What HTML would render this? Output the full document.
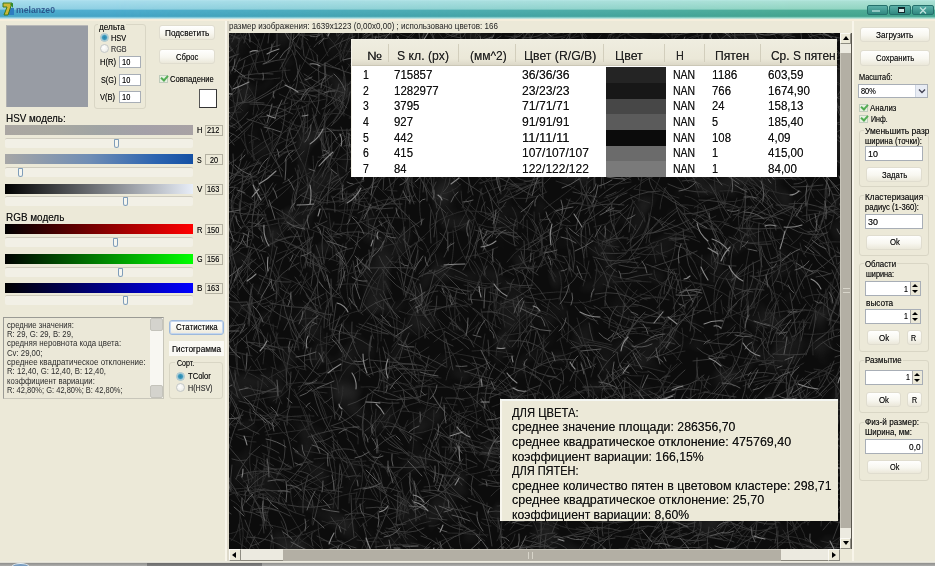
<!DOCTYPE html>
<html lang="ru">
<head>
<meta charset="utf-8">
<title>melanze0</title>
<style>
*{box-sizing:border-box;margin:0;padding:0}
html,body{width:935px;height:566px;overflow:hidden;background:#ece9d8}
body{position:relative;font-family:"Liberation Sans",sans-serif;font-size:9px;color:#222;line-height:1}
.a{position:absolute}
.t{position:absolute;white-space:nowrap;line-height:12px;height:12px;color:#161616;transform-origin:0 50%;text-shadow:0 0 .6px rgba(0,0,0,.6)}
#title{left:0;top:0;width:935px;height:19px;background:linear-gradient(180deg,#b2e2f0 0%,#a6dcec 8%,#8fd0e3 47%,#4eadcf 55%,#44a4c6 86%,#8ccce0 93%,#d8ecec 100%)}
#title .g{position:absolute;left:0;top:0;width:935px;height:19px;background:linear-gradient(180deg,#b6e8e0 0%,#aae0d4 8%,#92d5c2 47%,#4dac96 55%,#44a48e 86%,#8ccfc0 93%,#d8ece0 100%);-webkit-mask-image:linear-gradient(90deg,transparent 12%,rgba(0,0,0,.55) 50%,#000 85%);mask-image:linear-gradient(90deg,transparent 12%,rgba(0,0,0,.55) 50%,#000 85%)}
.btn{position:absolute;background:linear-gradient(180deg,#fffffe 0%,#f8f7f0 55%,#ebe8da 100%);border:1px solid #e0ddcf;border-radius:3px}
.inp{position:absolute;background:#fff;border:1px solid #a8aeb6}
.grp{position:absolute;border:1px solid #d9d6c5;border-radius:3px}
.lg{position:absolute;background:#ece9d8;height:9px}
.bar{position:absolute;left:5px;width:188px;height:10px}
.trk{position:absolute;left:5px;width:188px;height:10px;border-top:1px solid #cfccbe;background:#f2f0e6;border-radius:2px}
.th{position:absolute;width:5px;height:9px;border:1px solid #7f9db9;border-radius:1px 1px 3px 3px;background:#f6f6f0}
.val{position:absolute;left:205px;width:18px;height:11px;border:1px solid #b4b1a2;background:#ece9d8}
.rad{position:absolute;width:9px;height:9px;border-radius:50%;border:1px solid #c4c8c8;background:radial-gradient(circle at 40% 35%,#fff 0%,#e6e6de 100%)}
.rad.on{border-color:#a8c4cc;background:radial-gradient(circle at 50% 50%,#2a86aa 0%,#3c98bc 40%,#dfeaea 78%)}
.chk{position:absolute;width:9px;height:8px;border:1px solid #c0ccbc;background:#e8f0e2}
.chk:after{content:"";position:absolute;left:1px;top:-1px;width:5px;height:3px;border-left:2px solid #52ac52;border-bottom:2px solid #52ac52;transform:rotate(-48deg)}
.spb{position:absolute;right:0;top:0;width:10px;height:100%;background:#ece9d8;border-left:1px solid #aaa}
.spb:before{content:"";position:absolute;left:1px;top:2px;border:3px solid transparent;border-top:0;border-bottom:3px solid #000}
.spb:after{content:"";position:absolute;left:1px;bottom:2px;border:3px solid transparent;border-bottom:0;border-top:3px solid #000}
.sw{position:absolute;left:606px;width:60px}
.cs{position:absolute;top:44px;width:1px;height:18px;background:#d2cebc}
.sb{position:absolute;background:#ece9d8;border:1px solid #fbfaf4;border-right-color:#8e8c82;border-bottom-color:#8e8c82}
</style>
</head>
<body>
<!-- title bar -->
<div id="title" class="a"><div class="g"></div>
  <svg class="a" style="left:2px;top:2px" width="13" height="14" viewBox="0 0 13 14"><rect x="6" y="6" width="6" height="7" fill="#2c7cc0"/><path d="M1 1h9l-1 3-3 9H2l3-8H1z" fill="#cdb838" stroke="#3c7a1c" stroke-width="1"/><path d="M8 2l3-1v5z" fill="#2c8a2c"/></svg>
  <div class="a" style="left:867px;top:5px;width:21px;height:10px;border:1px solid #24706c;border-radius:2px;background:linear-gradient(#5cb0a8,#2f8880)"><div class="a" style="left:4px;top:4px;width:8px;height:2px;background:#c8e8e4;opacity:.6"></div></div>
  <div class="a" style="left:889px;top:5px;width:22px;height:10px;border:1px solid #24706c;border-radius:2px;background:linear-gradient(#5cb0a8,#2f8880)"><div class="a" style="left:8px;top:1px;width:7px;height:6px;border:1px solid #10282c;border-top-width:2px;background:#cfe8e4"></div></div>
  <div class="a" style="left:912px;top:5px;width:22px;height:10px;border:1px solid #24706c;border-radius:2px;background:linear-gradient(#5cb0a8,#2f8880)"><svg class="a" style="left:6px;top:1px" width="8" height="7" viewBox="0 0 8 7"><path d="M1 0.5l6 6M7 0.5l-6 6" stroke="#d8f0ec" stroke-width="1.3" opacity=".85"/></svg></div>
</div>
<div class="a" style="left:0;top:19px;width:935px;height:2px;background:#f6eedc"></div>

<!-- LEFT PANEL -->
<div class="a" style="left:6px;top:25px;width:82px;height:82px;background:#989ca4;border-top:1px solid #b8b8b8;border-left:1px solid #b0b0b0"></div>
<div class="grp" style="left:94px;top:24px;width:52px;height:85px"></div><div class="lg" style="left:98px;top:21px;width:28px"></div>
<div class="rad on" style="left:100px;top:33px"></div>
<div class="rad" style="left:100px;top:44px"></div>
<div class="inp" style="left:119px;top:56px;width:22px;height:12px"></div>
<div class="inp" style="left:119px;top:74px;width:22px;height:12px"></div>
<div class="inp" style="left:119px;top:91px;width:22px;height:12px"></div>

<div class="btn" style="left:159px;top:25px;width:56px;height:15px"></div>
<div class="btn" style="left:159px;top:49px;width:56px;height:15px"></div>
<div class="chk" style="left:159px;top:75px"></div>
<div class="a" style="left:199px;top:89px;width:18px;height:19px;background:#fff;border:1px solid #555;border-right-color:#333;border-bottom-color:#333"></div>

<div class="bar" style="top:125px;background:linear-gradient(90deg,#aaa6a2,#a8a8a0 25%,#a0a4a4 50%,#a4a0a8 75%,#a8a2a4)"></div>
<div class="val" style="top:125px"></div>
<div class="trk" style="top:138px"></div><div class="th" style="left:114px;top:139px"></div>

<div class="bar" style="top:154px;background:linear-gradient(90deg,#a6a6a6,#6f8db5 45%,#2c64b0 80%,#1450a4)"></div>
<div class="val" style="top:154px"></div>
<div class="trk" style="top:167px"></div><div class="th" style="left:18px;top:168px"></div>

<div class="bar" style="top:184px;background:linear-gradient(90deg,#000,#e8eef8)"></div>
<div class="val" style="top:184px"></div>
<div class="trk" style="top:196px"></div><div class="th" style="left:123px;top:197px"></div>

<div class="bar" style="top:224px;background:linear-gradient(90deg,#000,#f00)"></div>
<div class="val" style="top:224px"></div>
<div class="trk" style="top:237px"></div><div class="th" style="left:113px;top:238px"></div>

<div class="bar" style="top:254px;background:linear-gradient(90deg,#000,#0f0)"></div>
<div class="val" style="top:254px"></div>
<div class="trk" style="top:267px"></div><div class="th" style="left:118px;top:268px"></div>

<div class="bar" style="top:283px;background:linear-gradient(90deg,#000,#00f)"></div>
<div class="val" style="top:283px"></div>
<div class="trk" style="top:295px"></div><div class="th" style="left:123px;top:296px"></div>

<!-- memo -->
<div class="a" style="left:3px;top:317px;width:161px;height:82px;border:1px solid #9a9a94;border-right-color:#c8c6ba;border-bottom-color:#c8c6ba;background:#ebe8d8"></div>
<div class="a" style="left:150px;top:318px;width:13px;height:80px;background:#f8f7f2"></div>
<div class="a" style="left:150px;top:318px;width:13px;height:13px;background:#d4d3cd;border:1px solid #c4c3bb;border-radius:2px"></div>
<div class="a" style="left:150px;top:385px;width:13px;height:13px;background:#d4d3cd;border:1px solid #c4c3bb;border-radius:2px"></div>
<div class="btn" style="left:169px;top:320px;width:55px;height:15px;border-color:#9db9dc;box-shadow:0 0 0 1px #c4d6ee inset"></div>
<div class="a" style="left:169px;top:341px;width:55px;height:15px;background:#faf9f4"></div>
<div class="grp" style="left:169px;top:362px;width:54px;height:37px"></div><div class="lg" style="left:175px;top:358px;width:18px"></div>
<div class="rad on" style="left:176px;top:372px"></div>
<div class="rad" style="left:176px;top:383px"></div>

<!-- panel separator -->
<div class="a" style="left:225px;top:21px;width:2px;height:540px;background:#f8f5ea"></div>
<div class="a" style="left:227px;top:21px;width:2px;height:540px;background:#dedacb"></div>

<!-- CENTER -->
<div class="a" id="img" style="left:229px;top:33px;width:611px;height:516px;background:#0a0a0a;overflow:hidden"><svg class="a" style="left:0;top:0" width="611" height="516" viewBox="0 0 611 516"><filter id="n" x="0" y="0" width="100%" height="100%"><feTurbulence type="fractalNoise" baseFrequency="0.03" numOctaves="2" seed="4"/><feColorMatrix type="matrix" values="0 0 0 0 0.11  0 0 0 0 0.11  0 0 0 0 0.11  0.6 0.6 0 0 -0.62"/></filter><filter id="b" x="0" y="0" width="100%" height="100%"><feGaussianBlur stdDeviation="0.6"/></filter><rect width="611" height="516" fill="#0c0c0c"/><rect width="611" height="516" filter="url(#n)"/><g fill="none" stroke-linecap="round" filter="url(#b)"><path stroke="#2c2c2c" stroke-width="0.9" d="M134 282Q121 270 121 252M525 124Q546 135 567 147M462 353Q461 372 464 392M552 34Q551 43 553 52M175 262Q173 250 168 239M563 190Q576 198 589 205M365 157Q364 146 366 136M225 409Q231 394 230 378M46 159Q64 148 82 139M536 74Q545 90 544 107M58 274Q48 255 30 245M170 421Q158 420 147 417M24 307Q29 285 47 273M465 75Q481 67 496 59M489 175Q474 179 463 190M541 7Q550 11 560 14M185 154Q174 141 171 123M32 79Q44 67 49 51M385 219Q379 206 368 196M253 365Q246 373 236 374M564 419Q553 410 541 405M47 306Q43 299 44 291M44 469Q41 464 36 462M467 499Q471 510 470 521M219 200Q233 198 241 187M248 395Q249 376 241 360M418 267Q401 261 392 245M101 128Q104 112 102 96M360 128Q359 122 361 117M292 313Q290 292 290 271M449 456Q433 469 432 490M284 107Q283 88 272 72M137 85Q129 83 120 85M538 480Q520 492 508 510M357 355Q348 363 337 365M360 511Q345 506 336 492M158 349Q165 327 155 306M405 428Q403 408 400 389M53 254Q49 236 39 220M60 498Q71 494 80 487M210 165Q218 151 218 135M209 450Q207 440 201 432M453 82Q464 90 477 93M350 92Q368 80 389 85M616 361Q611 382 606 403M371 384Q352 387 332 391M385 8Q392 0 402 0M330 496Q310 486 288 488M7 23Q3 16 -1 9M435 278Q417 282 403 293M73 235Q70 226 73 217M242 73Q248 68 256 68M-5 229Q4 211 23 206M242 200Q247 177 253 155M87 326Q85 318 89 311M375 506Q364 501 354 503M54 196Q67 184 74 166M374 375Q362 366 356 352M442 -7Q461 -14 481 -12M563 387Q552 381 539 384M48 296Q50 290 51 283M136 7Q141 -9 154 -22M35 238Q21 223 1 215M30 172Q29 166 28 159M198 219Q203 211 212 207M42 381Q57 384 72 384M6 394Q-4 386 -18 384M167 37Q180 36 191 44M85 153Q85 138 84 123M214 454Q217 440 225 429M137 428Q130 428 123 429M328 72Q338 71 344 64M491 524Q491 533 485 540M261 168Q272 156 287 151M502 212Q501 218 499 223M276 426Q251 424 233 408M185 270Q201 257 215 241M441 486Q424 495 416 512M605 337Q584 349 561 348M229 440Q238 435 248 433M235 136Q237 126 231 117M31 107Q26 103 19 102M390 434Q380 430 370 435M25 128Q22 118 24 108M419 339Q412 340 407 338M515 466Q500 484 486 503M228 39Q237 16 258 2M437 154Q432 164 431 176M489 296Q487 312 495 326M607 447Q596 449 590 458M246 465Q244 459 240 456M223 156Q229 172 244 181M306 387Q288 384 272 380M267 323Q267 309 277 299M337 471Q315 471 294 464M308 201Q304 184 289 173M360 61Q366 49 377 44M188 137Q195 122 189 106M58 469Q48 458 33 455M-15 442Q-19 433 -21 423M429 26Q447 37 468 32M22 -14Q35 -12 47 -7M37 336Q13 341 -7 330M326 324Q346 322 361 307M538 390Q538 396 535 402M574 200Q569 207 562 212M534 443Q522 446 509 448M95 119Q92 100 98 83M267 294Q263 275 267 257M416 318Q401 330 388 344M388 225Q407 216 417 197M299 301Q288 281 268 269M359 438Q352 436 346 432M466 141Q484 147 500 153M51 287Q51 268 61 251M245 300Q248 294 250 289M111 260Q104 262 99 267M315 200Q311 191 310 180M87 350Q72 348 58 351M308 362Q313 342 326 326M334 305Q332 299 333 293M618 391Q616 410 602 425M69 -16Q89 -18 109 -16M434 74Q449 72 464 74M192 104Q181 87 175 68M129 211Q121 204 111 198M168 -6Q168 -18 174 -28M257 151Q242 137 228 124M178 242Q183 232 193 227M313 514Q307 513 301 513M199 12Q208 -1 214 -16M137 80Q138 72 133 64M347 169Q352 165 354 159M445 488Q434 468 414 457M444 524Q425 516 406 512M615 136Q616 160 633 176M129 481Q125 470 128 459M333 291Q322 279 307 277M470 435Q466 426 467 416M16 482Q12 472 2 467M110 492Q122 479 136 468M186 282Q189 271 196 262M296 412Q276 415 258 406M531 246Q524 259 525 275M224 181Q220 177 217 173M54 461Q44 444 32 427M329 519Q312 521 297 513M539 136Q533 142 533 151M485 144Q486 167 496 188M104 416Q85 405 78 383M355 -19Q363 -14 372 -16M276 294Q270 276 280 259M266 251Q245 251 226 243M21 287Q8 280 -3 270M-15 1Q-9 -3 -2 -4M442 332Q437 351 424 366M629 58Q625 67 622 77M584 366Q576 379 565 389M211 321Q196 340 172 341M402 250Q393 264 394 280M568 348Q575 362 583 376M223 307Q239 302 252 289M477 402Q464 386 451 370M144 408Q157 398 161 382M126 420Q125 411 118 406M250 103Q253 84 246 66M108 227Q108 214 101 204M305 65Q309 47 324 36M92 328Q94 321 93 314M257 -6Q265 -13 266 -23M603 128Q591 145 577 159M371 43Q377 31 378 18M37 496Q33 472 17 454M148 -4Q163 -18 163 -38M335 329Q327 322 318 319M439 309Q446 297 451 285M282 33Q286 12 301 -3M50 190Q32 195 13 193M459 304Q441 296 429 279M585 415Q579 416 575 413M95 369Q90 358 81 349M512 303Q508 284 519 269M473 33Q475 40 482 44M140 159Q125 162 109 161M289 459Q293 451 291 442M268 170Q276 165 280 156M29 453Q27 448 29 443M275 481Q271 491 273 502M573 183Q597 178 620 179M178 478Q172 466 167 454M217 278Q217 267 220 257M564 24Q586 33 607 23M50 56Q56 43 53 29M158 345Q165 324 178 306M124 23Q132 20 141 18M308 123Q315 117 321 110M529 237Q536 261 524 283M264 224Q260 219 254 214M162 9Q166 -14 154 -34M404 65Q405 56 413 50M372 131Q387 139 402 147M165 269Q160 259 155 248M104 313Q85 308 73 292M549 218Q566 228 578 243M283 -2Q284 -24 299 -40M35 451Q21 456 6 456M177 396Q162 388 145 388M586 515Q567 507 547 510M404 369Q402 363 396 361M259 -1Q255 -5 253 -10M364 133Q366 126 367 119M593 19Q591 25 594 32M242 394Q232 392 223 386M451 233Q457 243 465 252M592 274Q588 280 587 287M310 280Q293 284 284 299M583 468Q564 463 545 469M224 400Q231 395 236 387M7 14Q13 7 16 -1M413 204Q424 183 424 159M44 525Q46 500 36 478M600 299Q598 308 603 316M397 368Q383 374 372 384M576 481Q563 488 547 485M98 386Q94 367 80 354M587 167Q605 178 623 190M310 22Q307 15 304 8M74 502Q63 485 53 466M192 447Q182 458 177 472M297 487Q294 473 292 458M108 232Q118 223 117 210M177 63Q180 69 185 72M510 175Q508 191 513 206M386 37Q394 22 393 5M99 351Q84 348 69 354M6 457Q-1 451 -6 442M167 276Q182 262 184 241M473 344Q474 363 462 378M377 85Q374 80 374 74M402 165Q410 176 416 188M465 349Q461 357 461 365M177 281Q189 269 201 258M479 458Q472 434 450 422M124 142Q137 161 156 172M609 428Q603 447 595 465M589 436Q585 445 583 454M407 358Q398 363 390 367M259 420Q240 421 222 414M95 115Q96 108 100 101M485 53Q506 60 516 80M12 79Q-10 82 -32 73M144 111Q156 94 171 81M188 358Q168 349 150 337M441 129Q454 135 468 140M-15 14Q-13 -3 -3 -20M107 404Q93 384 89 361M97 -9Q109 -18 120 -28M14 495Q6 501 -3 501M362 344Q366 334 365 324M619 444Q616 451 610 456M468 75Q484 61 505 56M516 165Q518 187 505 204M-15 216Q-21 211 -28 210M580 421Q568 418 557 414M-1 414Q-16 401 -27 384M272 88Q271 75 275 62M557 268Q552 262 544 260M98 338Q96 319 98 300M433 277Q419 287 402 284M442 131Q458 117 467 97M156 243Q159 237 162 231M247 185Q237 192 225 194M597 183Q587 197 578 213M513 148Q536 158 545 182M413 487Q389 484 368 498M281 497Q291 486 290 472M372 9Q387 7 399 -2M192 482Q187 475 183 468M511 156Q518 158 525 155M613 291Q588 285 574 264M50 383Q26 385 5 373M575 140Q587 144 601 142M28 458Q38 445 40 429M312 333Q315 318 315 302M42 139Q57 129 70 115M332 475Q327 483 318 486M263 296Q263 284 271 275M572 -13Q587 -5 598 7M624 296Q616 296 607 297M601 419Q588 434 583 455M150 528Q142 507 153 488M180 266Q186 243 205 228M428 360Q417 363 405 363M378 210Q387 208 395 203M76 46Q92 32 110 22M158 157Q163 158 168 158M10 196Q17 194 21 187M433 251Q429 270 430 288M194 59Q197 42 212 31M563 141Q568 144 573 147M179 506Q170 497 157 495M239 274Q230 272 221 267M35 525Q24 516 15 504M200 516Q192 511 182 510M135 16Q133 2 135 -11M584 472Q571 478 557 485M595 23Q615 31 623 51M407 291Q401 296 394 302M268 199Q265 192 265 184M590 74Q591 79 590 84M403 31Q407 35 410 41M52 190Q72 192 91 200M561 482Q574 492 577 508M60 76Q72 78 81 70M258 77Q280 87 303 89M126 -7Q125 -12 126 -17M618 300Q617 307 612 312M198 66Q204 49 218 39M68 409Q51 402 45 384M156 460Q162 444 176 433M49 215Q44 212 40 208M473 473Q462 475 453 481M465 408Q457 429 438 441M42 108Q39 96 35 86M382 -5Q404 -6 424 -3M19 121Q15 109 15 97M453 457Q432 457 414 469M482 475Q471 457 463 439M230 -11Q243 -7 250 3M410 534Q395 547 389 566M295 440Q277 441 259 443M441 354Q417 352 395 364M241 501Q230 500 219 500M219 295Q223 286 231 280M510 122Q527 131 537 147M526 274Q508 280 491 287M34 331Q35 315 39 300M431 251Q425 245 425 237M469 400Q453 419 429 426M310 375Q297 378 290 388M572 492Q557 505 541 517M174 486Q178 471 173 457M295 484Q274 491 253 486M607 45Q593 54 586 69M394 526Q396 532 397 539M450 277Q462 285 466 299M142 503Q136 497 134 490M119 31Q127 40 136 50M449 107Q457 114 467 121M380 106Q388 125 398 143M608 311Q614 318 624 322M234 306Q240 292 249 281M595 187Q599 203 601 220M518 184Q517 194 519 205M468 22Q465 34 465 47M-17 47Q-39 43 -61 40M266 158Q262 150 262 141M174 41Q199 43 218 28M591 31Q601 27 612 22M40 345Q57 333 77 333M411 -13Q420 -24 432 -28M627 210Q617 217 612 228M87 497Q67 506 45 505M623 425Q610 408 588 404M320 59Q315 42 320 25M440 207Q447 208 454 206M450 39Q455 41 460 43M529 99Q509 110 489 121M86 475Q73 465 62 452M531 183Q552 191 564 209M65 356Q74 376 81 397M10 244Q16 223 34 211M428 155Q438 162 450 165M75 151Q68 144 66 135M309 218Q298 216 287 216M147 -1Q139 3 131 8M272 135Q291 151 315 150M349 392Q332 386 314 392M87 -15Q79 -16 72 -22M88 156Q104 137 103 112M228 395Q224 393 222 387M580 7Q590 10 600 8M11 469Q0 447 -20 433M301 461Q298 450 289 444M156 51Q165 35 174 19M613 328Q605 345 607 363M29 502Q36 491 37 477M2 256Q18 245 23 226M418 13Q428 22 435 34M305 145Q307 131 299 120M543 399Q534 405 524 408M525 143Q533 151 543 157M519 13Q512 -7 513 -28M354 173Q351 151 351 128M358 4Q351 -7 342 -18M469 344Q473 352 480 358M261 298Q257 285 260 273M360 362Q353 373 354 386M146 294Q159 284 166 269M192 189Q189 168 192 146M142 125Q143 119 147 114M419 200Q429 200 436 193M97 416Q95 407 89 399M172 210Q165 198 157 188M598 203Q607 216 608 231M34 289Q15 280 5 262M377 63Q380 56 383 50M250 422Q260 421 269 417M305 478Q289 481 276 492M127 460Q113 461 101 467M70 158Q92 145 98 121M99 199Q104 195 105 189M38 131Q43 108 61 93M299 425Q281 413 259 415M446 106Q456 100 465 93M29 458Q11 456 -4 464M355 397Q335 383 329 359M209 166Q200 161 196 150M52 -5Q68 -14 76 -31M195 284Q203 278 212 275M609 366Q617 378 617 393M388 372Q377 359 370 343M40 404Q36 394 33 383M529 279Q532 293 540 305M245 138Q241 124 245 110M107 76Q100 55 95 33M67 480Q60 467 62 452M182 30Q182 19 188 10M130 87Q151 93 171 86M85 308Q81 304 77 299M263 232Q256 223 245 222M25 308Q30 297 32 285M610 487Q590 481 570 480M574 286Q561 307 559 331M404 460Q388 443 366 437M501 258Q498 272 503 285M198 49Q206 36 212 23M103 534Q100 528 93 524M285 82Q296 72 307 62M495 508Q491 502 484 502M547 386Q539 386 532 390M549 -7Q556 -5 563 -3M452 172Q465 171 476 177M364 253Q377 234 397 221M429 415Q413 411 400 399M341 484Q335 484 330 485M22 124Q39 113 54 100M608 408Q596 416 593 431M108 294Q116 289 120 282M325 248Q323 242 319 237M207 371Q189 384 171 398M163 222Q168 207 176 194M34 293Q44 283 44 268M253 321Q254 311 256 301M562 85Q569 83 576 81M567 337Q547 345 526 352M259 108Q273 98 286 87M113 508Q102 510 92 507M364 188Q355 169 358 148M216 299Q211 305 205 309M261 254Q248 256 235 252M84 389Q71 387 57 386M209 484Q219 471 216 455M71 261Q74 250 78 240M240 159Q248 147 260 137M266 147Q276 135 281 120M383 229Q367 221 353 209M562 38Q569 51 580 60M339 56Q338 40 325 29M341 337Q334 322 331 306M546 263Q536 273 536 287M468 259Q464 269 459 277M452 330Q443 339 433 345M170 278Q186 285 203 281M547 367Q530 369 514 374M192 55Q212 42 223 21M100 160Q107 154 116 156M394 62Q413 54 433 51M153 458Q155 433 137 415M162 459Q174 440 195 431M279 487Q270 486 261 484M257 183Q256 169 251 156M-16 308Q2 303 16 289M618 488Q612 504 605 519M318 215Q327 223 338 224M294 195Q294 189 295 182M515 182Q531 183 546 188M559 29Q571 34 583 31M113 153Q108 142 108 130M272 359Q255 348 235 352M41 532Q41 517 43 502M129 411Q130 405 128 400M389 5Q391 14 394 23M128 185Q113 178 96 175M385 107Q391 103 395 97M362 23Q377 17 385 3M163 261Q159 255 156 248M524 419Q533 433 531 450M140 186Q160 183 180 186M390 40Q403 38 416 36M232 464Q213 455 199 440M97 530Q88 515 73 508M471 142Q486 155 495 172M450 376Q427 378 407 369M-13 80Q7 74 26 64M608 515Q605 523 597 527M149 154Q163 168 178 182M96 457Q77 444 55 437M571 467Q571 454 562 445M501 109Q509 131 523 148M232 339Q227 325 219 313M111 530Q93 517 77 501M246 241Q239 234 239 223M-16 174Q-10 151 -14 128M60 15Q65 -6 54 -25M175 137Q172 125 175 113M160 289Q152 288 145 283M33 17Q25 8 13 4M366 276Q356 274 350 267M151 106Q160 93 158 77M90 -5Q107 8 115 29M-13 201Q-35 205 -58 206M387 317Q373 310 356 309M251 81Q264 79 276 83M13 152Q21 147 30 147M473 57Q472 66 475 74M487 117Q492 123 496 129M-18 116Q-20 109 -26 106M398 75Q411 74 421 83M85 263Q76 251 71 237M426 157Q433 142 436 126M-9 307Q4 290 15 271M356 181Q365 173 365 161M147 262Q149 240 164 224M613 72Q621 83 633 89M14 139Q17 134 21 129M345 -18Q339 -8 334 1M6 255Q0 244 -10 237M303 7Q295 -11 292 -31M289 366Q279 363 270 359M465 359Q467 347 469 334M317 310Q308 300 301 288M465 44Q461 21 474 1M562 309Q547 319 533 330M131 531Q130 519 136 509M602 34Q611 14 629 4M401 43Q412 59 427 72M441 337Q435 332 430 326M471 263Q464 266 456 268M464 363Q459 367 456 371M-2 223Q9 215 11 202M349 317Q340 310 332 301M327 148Q351 154 366 173M302 15Q311 12 319 8M305 363Q302 357 298 354M466 446Q457 444 447 443M541 92Q554 90 565 98M572 227Q580 247 585 268M620 276Q642 281 664 279M256 71Q260 52 274 38M420 90Q443 91 465 87M223 523Q211 517 207 505M587 529Q565 518 554 497M6 200Q4 191 3 182M43 117Q43 107 44 96M582 290Q558 285 539 300M72 107Q69 96 62 87M-2 -2Q0 -13 3 -23M395 295Q400 290 400 283M35 477Q24 469 21 456M-19 258Q-17 241 -17 223M552 113Q551 132 564 147M283 142Q291 137 300 138M200 335Q196 329 190 324M592 12Q598 24 605 36M219 144Q224 132 236 125M569 78Q582 74 589 64M47 151Q36 173 12 183M220 54Q226 34 239 15M272 250Q250 261 225 256M188 408Q176 400 164 391M270 390Q268 385 263 382M447 -8Q467 -12 486 -19M558 350Q545 347 533 354M278 111Q285 107 292 103M449 200Q469 193 487 183M154 506Q145 503 136 507M272 396Q263 395 254 393M243 -14Q262 -16 280 -18M139 407Q150 388 164 371M560 336Q548 346 544 362M470 418Q447 416 426 425M213 191Q216 185 219 179M364 172Q387 166 407 152M567 89Q578 100 594 105M53 371Q48 361 45 349M455 355Q437 347 418 345M263 143Q271 140 277 133M11 324Q-1 318 -13 323M190 306Q192 286 180 270M82 351Q87 348 93 349M294 451Q272 448 250 452M501 238Q486 255 486 278M131 227Q148 213 169 210M390 118Q411 121 431 114M536 114Q547 135 547 159M413 500Q404 501 399 508M433 308Q421 297 407 287M504 174Q482 173 463 182M487 227Q485 238 485 249M415 67Q423 77 435 77M407 129Q413 108 419 87M369 201Q376 194 382 186M262 441Q273 422 288 406M616 95Q621 111 626 126M97 64Q79 54 69 36M372 -12Q375 -18 380 -21M37 187Q18 173 1 159M189 -14Q188 -27 189 -39M411 112Q418 113 424 118M143 81Q128 85 119 99M302 528Q281 521 271 500M124 172Q134 160 146 149M24 373Q30 361 29 348M72 507Q55 490 31 492M618 335Q606 348 607 365M170 516Q163 506 156 497M451 178Q459 191 467 205M502 184Q491 188 486 199M361 496Q345 499 331 508M215 69Q227 58 229 42M22 449Q25 437 29 426M617 74Q626 86 635 98M602 249Q600 260 603 271M243 271Q222 276 199 273M-15 268Q-27 280 -39 292M301 359Q296 346 295 331M211 491Q206 494 200 493M316 422Q305 422 294 426M374 479Q373 466 375 453M499 285Q498 262 508 242M-4 501Q-1 496 0 490M287 238Q300 218 322 211M69 313Q60 302 61 287M141 26Q148 24 156 22M312 454Q296 453 280 458M72 61Q85 56 99 59M551 337Q564 337 575 330M310 224Q317 206 310 189M430 427Q417 434 401 436M546 535Q539 535 532 535M80 218Q73 203 75 186M346 148Q356 130 352 110M207 0Q223 -7 237 -16M360 323Q353 304 348 285M619 65Q622 85 623 106M205 415Q210 408 212 399M308 233Q296 233 287 241M11 -6Q28 -19 36 -39M327 189Q337 195 348 192M595 353Q582 358 573 370M499 144Q522 138 544 143M80 218Q61 213 48 200M474 488Q465 475 450 472M18 52Q19 39 25 27M-2 194Q0 181 0 168M410 412Q402 411 395 408M523 157Q538 175 561 183M383 385Q368 377 355 366M272 258Q255 245 245 228M533 426Q514 420 497 430M97 204Q104 202 111 205M49 311Q42 298 39 283M199 36Q198 27 197 17M491 349Q484 362 471 370M435 410Q437 422 430 431M531 -11Q549 -11 563 1M454 175Q463 183 475 183M473 252Q467 256 461 260M207 395Q195 400 182 401M141 524Q137 510 126 499M-4 302Q-7 291 -15 282M20 -8Q21 -17 15 -24M396 515Q407 497 409 475M64 479Q53 474 47 464M572 406Q565 411 563 421M545 280Q540 287 533 288M439 130Q450 129 461 134M475 295Q459 286 441 286M582 277Q561 277 547 293M196 159Q197 148 205 139M49 83Q62 93 79 95M361 79Q382 81 403 84M162 520Q154 511 147 501M63 264Q52 249 41 235M519 105Q519 114 523 123M442 244Q423 259 400 267M435 502Q428 515 426 530M27 409Q16 409 7 403M447 201Q447 219 440 235M155 348Q151 332 150 315M455 175Q456 188 463 199M235 -17Q243 -30 255 -39M37 173Q54 162 67 147M312 463Q312 449 306 437M258 504Q242 490 232 472M144 170Q166 162 187 169M423 1Q432 0 441 1M630 109Q639 118 651 121M629 17Q639 14 644 5M486 254Q483 275 488 296M520 232Q516 254 520 276M426 412Q413 399 396 393M516 496Q503 504 488 502M32 336Q30 331 28 326M25 172Q40 184 42 204M1 347Q-1 338 -2 329M592 43Q589 48 585 52M121 119Q130 122 139 122M264 437Q256 433 249 426M621 241Q611 249 602 258M132 301Q113 297 95 305M511 56Q519 57 526 54M113 337Q101 339 89 341M572 95Q577 100 584 104M427 230Q426 218 420 207M413 394Q403 373 400 349M361 126Q374 114 390 108M233 113Q239 111 246 107M374 68Q380 65 386 62M361 181Q362 169 353 160M238 229Q227 209 225 187M533 57Q542 71 545 88M407 507Q417 527 415 550M39 483Q18 474 5 456M543 451Q558 468 562 491M362 245Q358 234 347 228M150 509Q139 509 128 507M180 352Q170 348 159 352M2 508Q9 501 10 491M346 18Q352 24 355 31M51 195Q58 186 63 176M231 38Q233 32 236 26M275 15Q283 5 293 -1M428 133Q434 137 437 144M453 497Q439 501 429 513M7 356Q-5 344 -20 336M628 382Q622 385 615 389M216 295Q194 300 176 314M122 1Q118 -12 111 -25M608 214Q610 223 618 229M520 149Q540 160 563 162M573 523Q563 520 553 520M277 367Q270 372 263 374M576 424Q565 433 556 445M332 463Q329 458 326 454M594 18Q583 29 581 45M370 213Q366 190 363 166M106 381Q97 368 85 359M515 468Q501 483 493 502M599 396Q598 410 589 421M617 293Q612 296 609 300M613 503Q593 515 577 532M354 216Q347 205 336 198M506 491Q499 491 491 492M102 425Q108 411 102 397M82 378Q74 369 65 362M258 56Q264 54 266 47M352 64Q368 55 384 47M599 436Q598 443 593 449M470 35Q472 30 472 25M291 478Q299 469 300 457M402 380Q402 390 401 399M242 473Q234 476 226 477M574 265Q584 260 595 262M196 21Q206 14 218 14M141 92Q148 76 149 58M83 63Q105 59 125 49M319 369Q315 365 313 358M-19 -2Q-13 -24 -12 -47M373 43Q394 47 411 35M240 46Q265 49 285 34M543 157Q553 180 577 188M68 42Q77 29 81 13M502 454Q508 468 502 482M266 420Q260 417 255 412M158 94Q164 84 173 78M152 257Q130 248 107 252M-18 0Q-11 -15 -1 -30M282 436Q273 431 263 427M519 173Q526 180 536 180M135 96Q131 88 124 82M-7 347Q-18 333 -33 326M284 273Q278 275 273 274M74 -14Q83 -18 91 -24M155 527Q145 529 137 535M177 505Q173 485 162 468M124 268Q108 286 100 308M448 385Q444 380 441 375M617 335Q617 356 602 370M544 427Q540 436 538 445M570 288Q575 311 564 331M155 355Q170 349 179 334M190 351Q191 339 185 329M627 45Q640 44 653 49M465 175Q475 167 486 165M-19 338Q-17 328 -10 322M418 407Q410 402 400 402M581 35Q581 41 584 45M402 44Q412 53 425 53M76 461Q63 445 45 437M332 -2Q338 -4 343 -8M194 419Q206 400 205 377M320 95Q320 80 312 67M165 338Q170 335 177 337M535 328Q512 326 488 319M289 314Q290 304 291 294M626 326Q640 328 650 337M294 529Q284 522 274 513M371 419Q360 433 343 440M164 10Q157 3 148 0M69 333Q58 322 48 310M587 52Q590 64 597 74M445 378Q446 390 453 400M80 -4Q83 -17 82 -30M162 163Q166 143 173 125M543 199Q548 212 549 226M436 339Q415 333 394 330M523 243Q528 246 531 251M146 125Q153 121 159 117M66 397Q61 388 50 386M-17 313Q-19 300 -28 293M75 109Q75 86 64 66M144 381Q140 371 144 360M65 73Q76 63 86 51M138 27Q141 13 154 5M278 83Q290 76 299 64M98 360Q87 359 77 357M116 271Q104 250 112 228M354 253Q358 241 360 228M190 369Q169 374 155 389M422 249Q403 247 384 249M367 75Q375 91 384 108M251 429Q236 412 235 389M401 162Q410 167 421 170M329 236Q318 219 307 202M604 413Q597 432 580 443M212 -18Q208 -25 208 -33M163 532Q146 528 128 531M262 530Q239 527 220 513M327 203Q322 202 318 199M331 108Q336 92 344 77M544 516Q527 524 519 542M92 286Q78 283 65 289M387 131Q407 133 423 118M103 238Q110 235 117 235M316 425Q297 426 285 441M514 231Q507 240 502 250M146 334Q133 334 124 342M73 467Q64 451 50 440M66 262Q76 246 92 237M497 92Q502 93 506 96M354 13Q371 18 381 34M2 307Q-12 295 -31 296M171 104Q170 91 172 79M255 91Q265 109 274 128M391 -8Q379 -20 372 -37M32 382Q12 371 8 349M259 91Q258 84 263 77M15 240Q20 230 22 220M110 349Q115 335 127 328M302 107Q310 92 313 75M629 511Q610 513 592 508M371 40Q372 20 380 2M438 284Q433 295 433 307M18 251Q19 237 19 224M150 469Q135 450 132 426M516 153Q517 173 504 188M48 363Q36 365 23 368M407 61Q423 56 435 43M476 454Q455 465 432 469M366 362Q365 356 361 351M356 465Q339 464 324 455M605 353Q591 362 587 379M299 87Q317 77 322 57M475 412Q466 403 453 402M534 34Q539 38 545 37M619 -18Q618 5 612 28M443 -17Q458 -5 478 -8M14 154Q10 163 3 169M-4 457Q-5 451 -7 445M200 314Q184 326 165 325M545 470Q528 468 515 459M208 213Q209 191 200 171M14 78Q5 68 -6 61M289 338Q294 335 299 333M234 438Q228 416 210 402M475 503Q468 508 459 508M215 30Q225 32 234 27M621 126Q626 131 628 137M618 29Q622 36 623 45M209 -13Q226 -17 241 -25M494 274Q505 291 523 301M439 494Q430 506 416 510M519 210Q539 210 558 205M554 101Q535 115 523 135M372 418Q365 414 359 409M524 1Q541 9 560 14M401 83Q415 80 423 69M223 119Q228 98 238 78M393 367Q382 365 375 357M549 224Q552 230 558 232M602 335Q578 343 566 365M248 252Q255 238 259 223M578 198Q596 211 614 223M109 476Q101 457 87 444M323 0Q334 -2 344 -7M434 397Q431 419 418 438M456 82Q452 70 456 58M10 216Q15 213 21 214M39 354Q31 344 19 340M267 275Q266 253 271 230M84 99Q97 93 110 98M110 173Q123 167 130 153M169 219Q161 201 149 184M93 488Q100 491 107 491M303 468Q293 458 291 444M96 0Q114 -7 133 -7M567 227Q562 236 552 239M229 194Q237 182 242 168M448 104Q443 116 449 128M80 393Q79 383 74 374M520 123Q534 131 548 138M248 87Q234 77 220 67M144 89Q153 79 166 74M48 221Q59 217 69 213M204 259Q215 238 234 223M-1 391Q5 382 8 371M45 378Q39 382 33 386M55 449Q37 444 24 431M511 87Q525 90 533 101M532 82Q543 84 551 91M256 356Q273 343 283 324M84 257Q73 240 59 224M181 407Q164 391 163 368M310 191Q322 177 340 172M169 441Q165 448 159 453M205 389Q190 377 171 378M584 56Q604 62 622 71M474 529Q461 540 454 555M-17 39Q-35 29 -47 13M215 62Q210 51 215 40M221 420Q224 401 228 383M115 425Q111 415 103 408M245 310Q248 303 250 295M548 97Q557 108 572 108M151 36Q158 31 164 25M43 350Q42 342 44 335M602 281Q601 294 603 307M541 194Q541 215 556 229M-9 88Q10 81 19 61M71 515Q58 504 52 488M630 176Q648 194 646 220M331 277Q326 273 321 269M326 249Q321 236 315 223M497 380Q500 390 496 400M144 152Q155 141 164 128M543 328Q537 335 534 344M275 406Q263 391 253 374M443 23Q455 6 475 1M422 524Q408 508 409 486M46 214Q41 196 35 178M233 485Q227 502 233 518M491 197Q503 183 508 165M227 503Q215 506 204 512M289 131Q299 122 308 111M272 355Q257 348 242 342M466 294Q466 303 461 311M77 337Q54 333 39 315M341 228Q337 211 338 193M109 6Q108 0 112 -5M117 211Q131 194 136 173M451 515Q435 512 422 503M467 525Q462 523 456 522M310 332Q301 322 293 311M509 340Q501 342 493 345M199 31Q204 22 207 12M174 477Q160 482 146 485M424 210Q442 204 460 196M184 100Q188 90 190 80M447 392Q432 395 416 395M153 478Q151 459 149 440M289 472Q281 470 274 464M283 435Q269 422 264 403M547 57Q561 63 576 66M345 414Q340 406 330 404M435 301Q428 297 421 298M175 163Q180 140 194 122M22 194Q31 180 44 169M620 430Q609 446 591 451M99 134Q100 129 99 124M431 42Q437 47 443 52M322 81Q337 68 339 48M92 527Q84 528 77 533M494 1Q508 -2 519 -10M550 141Q557 133 564 125M204 154Q191 140 187 121M491 335Q492 357 507 373M196 280Q201 264 209 250M0 464Q-11 470 -23 475M118 179Q120 167 114 156M578 -13Q583 -7 589 -2M458 218Q467 230 471 244M372 506Q360 499 347 495M308 478Q301 472 298 462M430 461Q442 474 445 491M330 21Q340 11 355 10M411 479Q402 468 389 461M538 169Q548 184 555 200M381 85Q386 94 396 98M133 205Q118 200 102 201M518 193Q524 216 542 231M485 320Q481 310 475 301M505 203Q511 209 517 215M412 455Q393 462 374 465M163 314Q177 298 185 279M278 229Q292 210 314 205M160 467Q147 482 131 494M28 163Q35 162 40 159M318 279Q319 272 321 266M561 238Q559 246 555 253M244 192Q232 177 232 158M143 3Q162 7 180 13M302 238Q305 229 305 220M118 -8Q141 -15 162 -1M486 448Q475 470 457 486M397 432Q380 413 381 387M193 244Q198 225 211 209M494 160Q496 167 496 174M213 278Q223 289 235 298M408 299Q389 298 374 288M215 262Q229 265 242 272M554 462Q534 464 513 461M155 258Q153 246 155 234M217 309Q214 295 206 283M614 357Q623 375 618 395M90 418Q80 403 72 387M43 140Q22 128 12 105M291 258Q291 244 283 232M296 512Q288 513 282 517M396 273Q402 265 408 257M354 155Q358 149 365 145M296 427Q290 422 283 418M562 227Q539 239 530 263M581 1Q601 10 623 6M-17 310Q-31 290 -39 267M621 384Q618 377 613 373M527 294Q540 305 540 322M392 180Q372 176 359 159M232 28Q239 25 244 19M334 69Q336 62 337 54M611 230Q610 239 609 247M510 48Q518 60 524 74M304 207Q306 200 309 194M453 352Q443 353 435 359M443 139Q451 146 456 156M156 76Q165 66 169 54M464 100Q480 116 490 136M262 493Q256 493 252 489M451 490Q438 489 424 487M581 196Q595 212 605 230M359 356Q336 361 324 381M240 210Q240 205 239 200M21 15Q12 4 7 -8M420 81Q425 71 436 68M290 470Q277 452 271 433M522 53Q542 52 557 67M285 323Q279 323 274 324M412 362Q405 363 400 360M88 102Q107 90 115 70M618 381Q600 386 581 384M50 261Q45 237 59 217M615 459Q600 465 586 474M77 71Q63 61 54 47M12 298Q18 284 21 270M516 58Q533 74 552 89M434 414Q450 423 456 440M429 307Q415 298 399 301M200 306Q192 299 191 288M5 6Q11 6 17 3M339 353Q321 369 298 372M249 515Q267 524 273 544M591 348Q589 343 590 337M37 402Q59 399 80 396M458 283Q451 268 437 259M320 21Q336 26 352 23M545 358Q538 377 544 397M145 306Q142 300 142 294M312 234Q313 228 317 224M376 483Q360 469 340 460M586 340Q581 340 576 338M582 458Q577 475 579 492M607 65Q618 68 629 63M518 375Q512 382 505 387M503 44Q502 62 501 81M90 190Q93 183 94 175M35 529Q29 509 14 495M172 229Q166 230 160 228M405 156Q417 145 432 141M347 35Q352 29 360 29M71 374Q65 374 58 374M282 154Q287 152 293 152M565 227Q546 235 527 240M218 452Q201 436 183 420M58 104Q59 97 62 89M427 218Q432 222 438 224M80 108Q76 86 81 64M28 271Q36 272 43 267M110 360Q108 337 94 318M624 309Q639 316 648 329M3 231Q-1 219 -1 206M15 346Q18 340 22 333M-15 301Q-19 296 -25 291M2 41Q-2 22 -17 9M230 417Q238 398 252 384M295 495Q284 498 276 505M627 95Q633 96 637 93M398 207Q407 205 414 201M183 17Q190 3 204 -4M220 388Q228 366 233 344M292 458Q281 466 270 473M62 -11Q67 -23 76 -33M516 531Q529 513 541 493M225 148Q232 126 229 103M297 322Q315 310 329 293M474 42Q480 54 491 60M385 15Q392 23 403 26M344 40Q353 32 354 20M448 236Q442 237 436 236M375 388Q364 376 364 359M337 166Q351 173 366 173M98 331Q113 327 123 316M341 259Q337 234 321 216M525 173Q519 185 521 198M517 265Q520 273 516 281M310 514Q311 500 304 488M193 266Q183 264 173 268M38 93Q47 72 66 60M-3 292Q-21 298 -40 299M-3 221Q-16 220 -25 212M448 458Q430 448 409 442M398 386Q393 376 384 367M540 430Q549 436 559 441M63 449Q70 438 80 430M2 250Q3 238 3 225M215 136Q209 131 202 131M238 438Q237 430 237 421M522 85Q535 83 546 77M423 388Q432 404 430 422M68 515Q69 507 72 499M233 420Q222 406 211 393M327 18Q351 21 374 13M502 472Q494 476 484 478M403 33Q413 15 431 6M233 175Q235 167 242 163M330 267Q335 252 330 238M23 323Q12 322 2 317M107 461Q90 458 75 453M35 274Q60 269 72 248M21 480Q23 468 33 461M484 432Q482 422 482 411M424 474Q411 469 396 467M98 68Q97 60 102 54M556 309Q545 307 536 310M547 396Q549 406 554 415M30 77Q25 57 10 43M561 311Q552 292 539 276M288 213Q274 209 267 197M571 210Q572 218 577 224M520 217Q515 239 513 262M598 469Q592 480 592 493M74 451Q70 448 65 447M423 -18Q422 -8 429 0M333 527Q319 534 303 530M11 189Q7 185 3 182M170 487Q172 470 182 455M17 176Q3 177 -8 172M470 493Q473 473 476 454M473 222Q471 240 472 257M340 259Q317 258 295 264M0 198Q12 200 24 203M600 534Q591 534 581 535M223 419Q220 406 221 392M406 333Q405 327 401 322M346 153Q331 165 315 176M328 223Q327 209 322 196M237 379Q229 366 224 352M216 459Q213 438 225 421M76 -10Q79 -16 83 -22M549 193Q527 192 507 182M342 421Q318 416 294 423M246 4Q251 -13 256 -32M455 16Q462 26 473 33M415 495Q391 494 371 508M95 329Q90 311 92 293M544 0Q559 17 560 39M426 46Q442 50 457 44M37 -13Q36 -30 44 -45M301 371Q282 355 258 355M463 123Q483 132 500 144M542 473Q547 451 547 429M93 175Q96 161 104 150M314 381Q295 373 275 368M490 443Q495 458 504 472M338 42Q344 38 352 37M506 325Q502 349 484 365M554 348Q533 344 514 353M91 464Q86 461 82 456M417 210Q421 195 420 180M322 463Q306 474 287 471M17 509Q22 486 26 462M-19 196Q-21 191 -22 186M259 502Q250 502 241 501M463 42Q476 42 490 44M51 388Q45 396 36 399M58 350Q57 332 53 314M621 123Q629 129 637 133M250 196Q246 183 237 173M30 41Q45 38 61 37M486 321Q491 331 498 341M423 516Q401 528 393 552M352 122Q373 118 395 116M403 469Q390 460 384 445M72 16Q74 11 72 5M378 225Q373 212 363 203M410 235Q399 220 402 201M258 348Q250 332 232 326M70 317Q68 300 62 284M628 500Q619 503 613 510M-16 7Q-1 9 11 2M250 -15Q270 -19 289 -27M274 314Q283 291 302 276M313 35Q319 23 326 12M99 23Q89 3 93 -19M328 400Q319 400 311 400M292 94Q307 102 324 102M466 490Q450 492 435 486M234 519Q227 524 221 530M333 337Q320 335 308 330M120 470Q119 453 131 440M521 165Q527 175 536 182M63 177Q61 161 70 149M5 109Q22 97 29 78M619 6Q625 19 630 33M574 207Q584 212 591 221M-14 413Q-32 413 -46 401M301 371Q289 356 272 347M188 30Q192 15 190 0M312 88Q334 82 347 63M150 420Q144 398 147 376M420 518Q407 527 391 530M304 337Q308 327 309 316M331 507Q318 511 310 523M184 154Q167 140 149 130M527 523Q520 518 515 511M99 528Q89 510 89 490M405 77Q416 71 428 68M555 399Q549 399 544 401M608 360Q609 373 615 385M206 289Q195 268 184 248M193 12Q196 -10 210 -29M160 -7Q175 -23 178 -45M602 447Q596 469 602 491M464 367Q446 384 443 408M310 360Q295 364 279 364M416 115Q425 113 431 107M542 -2Q553 3 564 6M75 211Q58 198 53 177M17 315Q22 314 26 309M60 89Q68 82 70 72M321 390Q308 389 297 396M236 60Q250 62 264 62M42 135Q48 123 60 118M415 431Q403 418 395 403M126 427Q106 423 85 426M485 10Q490 22 501 29M537 158Q533 164 533 171M68 198Q59 187 47 179M597 256Q595 269 594 283M430 -10Q450 -17 466 -29M-8 100Q-7 95 -1 92M491 168Q506 171 520 164M440 267Q426 263 411 261M543 418Q542 443 556 463M321 129Q330 121 341 122M-14 431Q-33 427 -51 435M53 40Q56 29 63 21M105 144Q100 134 96 123M607 167Q606 182 601 196M355 509Q348 521 336 529M453 295Q457 312 448 327M27 88Q39 73 59 70M251 360Q240 368 226 365M600 34Q615 37 631 40M55 384Q32 375 21 352M201 288Q193 280 188 269M290 428Q276 424 263 416M621 102Q615 115 611 128M615 93Q621 104 631 113M62 255Q66 250 73 249M354 192Q360 190 365 186M366 414Q356 402 344 392M286 21Q284 10 286 0M606 513Q586 523 569 535M5 39Q23 27 45 28M38 143Q44 141 51 143M152 136Q146 122 153 108M535 472Q524 493 518 515M90 312Q108 308 126 303M320 496Q314 495 308 498M421 81Q433 78 441 69M338 309Q341 293 338 278M535 48Q540 60 552 64M167 30Q166 12 154 0M35 171Q24 174 15 169M419 81Q444 87 465 72M627 105Q638 112 650 116M88 282Q82 273 74 268M-11 167Q-30 150 -31 124M165 79Q170 70 180 65M170 486Q173 473 171 460M247 106Q254 88 261 70M555 278Q546 281 536 280M527 362Q522 369 518 376M317 159Q312 150 313 141M441 493Q434 496 429 499M239 279Q235 276 231 272M191 391Q201 373 200 353M451 481Q449 492 451 502M590 211Q604 207 618 210M412 248Q388 246 366 237M378 126Q374 105 360 88M20 259Q17 254 12 250M327 296Q323 292 319 288M108 249Q119 239 133 237M89 23Q85 18 81 15M202 192Q219 181 238 177M464 251Q471 262 468 274M121 447Q110 428 108 407M472 152Q473 158 479 162M22 200Q9 188 10 170M283 405Q278 408 272 408M252 16Q257 7 266 0M181 426Q175 436 165 440M447 484Q437 482 432 473M538 295Q517 286 498 274M542 454Q544 478 563 493M123 -13Q125 -26 119 -37M297 235Q312 236 323 227M380 338Q369 360 373 384M393 39Q400 47 407 52M447 415Q434 416 421 416M372 222Q377 215 379 207M132 529Q111 534 93 547M343 244Q339 231 341 217M138 157Q153 142 174 138M591 460Q574 476 563 498M-14 251Q-14 228 -21 207M491 91Q499 100 511 103M514 421Q511 429 505 436M152 68Q167 60 175 45M455 260Q438 252 420 244M88 149Q104 129 99 105M290 211Q284 205 279 198M47 467Q40 462 34 456M574 431Q552 429 531 433M184 232Q165 217 162 192M362 75Q373 84 377 96M312 498Q315 481 308 465M318 282Q297 274 275 268M104 346Q98 337 99 326M29 40Q25 30 21 20M295 4Q293 -6 298 -17M480 469Q457 467 443 449M536 -2Q558 2 580 -1M319 99Q323 93 325 87M509 357Q503 365 494 369M478 436Q477 450 483 462M252 193Q260 178 276 173M237 56Q249 44 248 28M18 224Q20 215 23 206M133 397Q123 386 113 375M173 312Q171 306 172 300M430 26Q441 39 457 46M418 465Q410 466 404 470M235 -5Q236 12 246 26M78 220Q81 216 84 212M-13 282Q-11 274 -12 265M48 294Q28 288 13 275M310 26Q326 26 343 24M487 191Q492 201 498 211M26 328Q35 316 47 308M522 135Q520 147 513 158M492 267Q493 274 494 281M187 487Q198 480 200 467M319 310Q316 315 311 317M308 296Q291 301 273 303M101 168Q90 167 80 162M498 73Q505 54 518 38M474 503Q461 497 449 489M482 195Q500 203 509 220M583 305Q584 313 584 322M337 335Q338 327 342 320M520 432Q506 441 501 457M7 21Q10 13 11 4M10 265Q-7 251 -9 228M224 452Q209 452 195 454M293 383Q280 389 267 392M279 472Q274 473 268 473M240 268Q238 259 239 249M235 534Q246 534 256 532M459 93Q460 108 459 123M582 346Q578 355 577 365M166 75Q179 73 189 81M106 382Q114 369 114 353M360 495Q351 489 345 480M44 210Q58 195 70 179M488 45Q510 47 531 53M74 316Q76 307 77 298M434 478Q426 474 416 473M552 260Q541 280 527 298M44 278Q53 258 44 238M477 44Q481 41 486 39M190 366Q186 353 176 345M50 61Q72 74 97 66M-8 38Q-11 33 -15 29M95 400Q101 392 103 383M480 510Q465 514 456 527M228 296Q224 280 227 264M581 525Q568 509 563 488M471 191Q485 185 500 191M261 69Q243 71 226 76M225 297Q221 274 213 251M467 32Q468 19 478 10M295 512Q285 521 281 535M176 206Q175 186 170 167M51 45Q32 48 13 44M300 389Q306 384 313 380M139 204Q142 186 135 170M428 21Q447 9 468 2M-12 170Q-11 147 -3 125M395 435Q373 434 357 418M22 441Q18 420 25 399M309 107Q316 110 322 115M624 92Q629 100 631 110M489 121Q497 117 505 111M452 395Q436 394 425 405M306 502Q298 504 292 510M133 275Q139 253 155 238M299 33Q305 15 299 -2M51 392Q38 382 34 365M340 471Q332 452 313 444M282 -9Q288 -12 295 -15M311 8Q320 2 331 0M263 -10Q284 -25 309 -22M195 108Q188 104 180 106M449 426Q438 409 428 392M95 430Q84 438 74 447M277 163Q298 170 318 159M43 271Q29 261 18 246M281 314Q276 307 269 303M390 292Q384 285 375 284M624 310Q632 316 642 317M272 296Q251 285 235 267M378 449Q373 444 366 445M219 417Q226 395 239 375M347 391Q328 380 310 365M558 27Q572 30 584 38M363 0Q369 -16 381 -29M428 8Q442 16 457 16M576 391Q570 406 577 420M63 434Q48 427 33 420M120 408Q115 388 102 373M55 344Q51 337 42 334M550 102Q564 115 568 134M589 31Q596 47 612 53M349 340Q348 334 348 329M414 383Q406 363 415 342M463 131Q464 148 470 164M207 350Q185 356 164 359M528 509Q513 508 500 501M624 521Q630 538 626 555M226 403Q233 396 239 388M465 -12Q484 -4 504 3M106 10Q118 -3 127 -19M309 16Q317 6 328 -1M133 429Q126 419 121 408M310 447Q304 454 294 456M317 487Q313 502 302 512M233 218Q244 208 246 193M367 104Q387 101 406 111M512 534Q515 542 519 550M373 214Q373 208 377 204M208 336Q190 329 179 314M9 164Q24 147 43 136M445 399Q428 414 412 431M211 89Q204 81 198 71M44 319Q42 311 41 302M112 338Q114 329 114 320M591 260Q586 278 580 296M379 384Q371 376 363 367M270 281Q273 274 272 268M280 234Q301 229 320 218M289 25Q295 35 297 46M536 497Q557 505 576 514M179 426Q173 427 169 424M555 119Q556 110 553 101M37 161Q37 155 35 150M-18 216Q-13 196 3 185M399 512Q388 533 386 558M336 377Q325 373 314 368M366 317Q353 312 340 307M379 489Q371 490 363 488M513 103Q524 121 526 142M527 138Q538 135 550 135M227 357Q206 352 194 333M306 345Q306 324 320 309M483 194Q487 211 497 226M236 401Q229 398 221 400M172 136Q176 129 182 124M525 189Q518 204 504 212M600 252Q603 262 609 271M11 176Q26 169 41 161M19 151Q21 143 27 138M166 345Q164 340 162 335M104 191Q124 193 142 186M377 19Q384 18 389 12M116 39Q128 20 145 7M145 69Q140 62 139 53M418 325Q396 312 386 289M487 474Q464 473 444 483M401 240Q418 227 429 209M259 279Q270 279 277 271M72 202Q76 181 93 170M401 437Q406 457 404 479M-19 42Q-6 34 8 33M597 338Q597 345 601 351M484 65Q487 58 492 53M370 125Q375 117 385 115M432 12Q453 3 469 -12M210 420Q210 412 208 405M284 293Q270 287 260 275M535 294Q532 316 538 337M508 421Q503 419 498 420M624 140Q636 155 652 166M502 336Q491 333 485 324M161 29Q176 11 191 -6M8 341Q10 323 4 307M189 530Q178 510 167 491M84 162Q89 159 95 158M389 532Q377 514 380 492M251 407Q245 404 243 397M37 432Q42 418 42 404M163 -3Q184 9 209 8M458 148Q464 147 470 143M324 245Q321 237 324 228M278 149Q287 137 286 122M618 -7Q639 -5 660 -6M565 405Q548 414 541 432M333 193Q332 184 325 178M182 427Q187 404 184 380M353 480Q341 472 327 468M387 206Q400 188 404 167M65 273Q62 269 58 266M486 16Q486 25 493 31M269 494Q255 475 244 456M94 83Q104 79 114 81M176 235Q173 226 168 219M360 363Q353 344 336 333M102 -18Q102 -30 96 -41M378 262Q357 273 335 269M312 94Q321 73 341 61M416 120Q431 123 446 125M502 105Q519 91 540 82M308 473Q313 476 316 481M430 72Q436 61 436 48M289 142Q270 146 250 150M499 428Q488 447 476 466M148 40Q151 30 159 23M258 295Q253 286 252 276M77 292Q77 285 76 278M491 158Q512 155 528 169M431 509Q408 505 386 503M452 524Q454 537 464 544M229 70Q245 80 263 78M127 245Q124 239 124 233M75 3Q79 -15 71 -32M583 33Q596 44 607 58M624 144Q604 159 579 157M289 257Q298 246 300 232M398 409Q390 387 389 363M413 343Q402 344 392 340M28 297Q26 292 22 288M163 43Q172 21 191 8M36 212Q33 200 30 188M246 133Q252 118 262 107M506 405Q510 382 504 360M524 129Q546 133 566 124M411 510Q405 506 398 504M10 343Q4 325 9 306M469 459Q462 451 452 449M151 355Q142 353 132 354M287 67Q304 75 322 70M183 121Q186 101 177 84M587 125Q594 129 602 130M510 385Q497 402 486 420M217 13Q221 10 225 7M70 314Q48 315 28 312M383 234Q382 228 377 224M89 361Q76 349 66 335M508 -18Q512 -24 517 -28M186 479Q175 461 163 445M4 128Q12 124 16 116M468 0Q476 19 475 40M501 494Q496 491 493 487M526 9Q534 6 543 7M218 334Q217 320 215 307M193 18Q192 12 193 6M2 38Q12 22 9 3M235 103Q228 81 212 66M63 203Q49 206 37 213M461 -14Q446 -3 443 14M-18 412Q-14 401 -15 389M304 94Q325 93 344 88M504 333Q488 348 466 348M318 31Q329 31 339 26M257 410Q241 409 227 400M443 257Q447 273 445 289M372 243Q367 235 365 226M625 30Q632 34 640 33M355 360Q349 359 343 359M112 80Q106 70 106 59M535 374Q522 389 516 409M212 131Q212 125 216 121M398 220Q390 204 376 195M214 328Q224 321 234 316M39 207Q35 200 29 195M456 163Q468 165 475 176M329 94Q342 91 354 84M294 114Q308 112 317 99M70 116Q79 98 73 79M314 445Q307 439 297 439M259 46Q246 32 247 12M299 415Q296 396 279 384M551 490Q536 485 522 480M274 431Q256 440 237 442M365 19Q371 14 379 15M336 230Q327 226 318 225M532 198Q524 201 516 203M202 488Q178 492 163 512M178 9Q192 9 203 16M615 390Q606 411 593 430M621 326Q616 332 612 339M574 20Q572 42 564 64M122 84Q110 79 103 69M93 86Q101 66 96 45M68 182Q76 176 87 176M389 492Q368 479 363 455M321 515Q314 503 301 500M85 28Q83 17 77 8M8 189Q0 171 6 152M550 457Q530 446 509 440M443 11Q443 -5 444 -22M234 358Q245 348 250 335M425 392Q405 403 393 422M397 6Q410 7 424 7M7 363Q10 351 5 340M362 437Q361 429 355 422M543 368Q560 379 581 375M607 44Q606 67 591 84M549 333Q532 331 520 320M579 419Q573 420 567 419M404 269Q390 255 377 239M138 78Q130 93 131 109M224 444Q200 442 182 425M39 461Q28 460 19 467M464 383Q447 368 425 370M534 198Q538 212 542 226M596 301Q581 310 573 325M458 500Q448 501 442 509M134 116Q138 107 145 101M298 313Q304 298 302 281M318 207Q300 194 281 185M228 -12Q241 -7 255 -8M481 95Q495 109 506 124M217 3Q229 -13 248 -21M371 448Q350 455 335 472M197 35Q203 24 206 11M568 476Q561 477 557 481M467 394Q456 401 449 411M202 229Q200 210 184 198M49 356Q33 343 22 325M0 377Q2 368 3 358M499 249Q502 254 506 257M217 347Q218 340 222 333M55 99Q73 94 88 82M262 490Q257 481 258 470M508 137Q499 155 495 175M181 420Q169 421 159 416M114 27Q114 15 122 5M481 240Q492 247 505 247M303 387Q296 379 286 379M381 75Q395 64 413 62M466 493Q451 494 436 498M166 230Q178 214 196 205M358 224Q357 205 356 187M26 461Q15 455 6 445M149 359Q156 340 160 320M355 82Q363 95 365 111M272 491Q273 500 268 508M161 -17Q184 -23 207 -29M154 210Q148 206 145 200M194 217Q189 214 186 210M613 41Q633 40 652 44M-19 206Q-22 184 -25 161M398 230Q412 217 430 212M152 67Q169 56 180 40M244 378Q226 379 213 391M260 273Q268 267 271 259M251 151Q266 144 277 132M517 299Q515 287 511 275M544 -8Q555 -5 565 -11M360 240Q353 241 346 241M412 148Q415 125 421 102M9 262Q10 245 2 230M316 5Q335 6 351 -4M564 113Q574 126 580 141M0 390Q-9 379 -24 377M294 64Q303 62 308 54M486 372Q480 371 475 370M52 360Q54 354 59 349M104 423Q90 420 76 418M148 257Q140 255 136 247M40 440Q41 424 38 408M422 380Q409 362 395 345M426 186Q445 192 464 200M466 90Q460 111 456 132M66 110Q41 104 27 82M348 362Q344 349 349 337M127 470Q137 449 132 425M187 40Q177 40 170 33M435 482Q418 500 418 526M205 161Q204 153 205 144M589 133Q586 156 568 169M441 294Q431 296 425 302M539 261Q527 270 516 281M2 154Q8 153 12 148M160 443Q155 429 142 423M65 195Q65 186 59 179M144 483Q122 486 100 489M430 324Q432 314 431 304M522 63Q525 70 529 76M83 474Q74 462 72 447M88 326Q82 326 76 327M278 58Q286 61 294 64M29 300Q23 277 22 253M490 -8Q508 -18 526 -27M232 389Q223 378 216 365M462 512Q453 506 447 498M551 469Q561 482 568 497M193 467Q179 479 162 486M310 435Q314 412 301 392M539 201Q547 206 553 213M403 55Q410 68 406 81M579 23Q598 31 608 48M182 350Q183 330 187 310M162 320Q174 304 176 285M348 451Q334 471 338 494M119 435Q118 429 116 423M120 234Q104 224 85 224M321 302Q320 290 312 282M397 376Q391 372 384 372M402 366Q383 359 369 344M190 26Q197 42 209 55M383 210Q377 205 371 200M99 139Q106 125 121 119M238 139Q244 126 256 116M36 29Q32 7 17 -9M526 492Q511 509 500 530M489 280Q476 276 463 278M336 485Q331 473 320 467M549 494Q529 501 508 495M539 343Q523 346 508 349M66 68Q60 61 61 52M138 493Q129 471 138 450M453 330Q444 319 433 311M92 170Q116 169 139 165M517 142Q525 159 541 166M302 0Q306 -12 303 -24M67 362Q83 348 101 336M564 123Q585 131 608 132M261 -14Q245 -18 236 -32M557 233Q563 253 571 271M83 331Q81 319 73 309M159 -15Q166 -9 167 0M20 110Q24 106 29 105M153 277Q151 268 144 262M371 135Q362 118 357 99M405 34Q413 34 419 30M438 520Q431 512 422 507M49 386Q55 389 62 387M497 91Q513 107 535 111M327 244Q315 226 303 207M275 497Q268 496 263 489M98 292Q102 275 97 259M616 292Q608 286 598 287M431 404Q415 403 400 405M584 390Q591 410 584 430M179 -13Q183 -30 193 -45M260 370Q262 348 279 334M248 421Q242 407 236 392M22 118Q32 110 44 103M526 135Q537 151 539 171M39 465Q16 464 -4 457M47 370Q49 362 49 353M552 60Q561 57 568 51M437 51Q445 29 466 18M344 326Q335 340 320 348M203 348Q195 346 188 348M308 198Q304 189 305 179M304 337Q317 323 335 322M303 219Q301 208 293 200M274 91Q262 81 248 75M21 42Q30 22 36 0M452 211Q458 221 466 230M557 485Q541 490 532 505M178 213Q183 198 180 182M-4 527Q-3 519 -5 510M2 197Q0 181 6 165M542 386Q534 392 524 391M289 135Q280 123 281 108M167 66Q150 58 136 45M504 105Q514 106 523 105M105 459Q109 437 102 416M88 336Q96 321 108 309M472 51Q495 58 516 48M521 453Q509 461 506 475M593 515Q574 503 552 503M401 372Q396 383 394 395M364 29Q380 11 404 8M538 107Q550 110 561 115M434 320Q447 304 451 284M393 217Q411 220 425 209M311 11Q326 23 343 30M484 12Q482 37 496 56M130 298Q139 286 148 274M113 265Q104 265 97 258M403 113Q408 118 413 123M212 345Q198 343 184 341M89 31Q96 23 102 15M611 404Q611 423 611 442M243 308Q223 302 209 286M216 395Q233 383 253 377M180 481Q174 465 172 449M36 436Q26 445 14 449M229 390Q209 376 200 353M388 423Q379 416 371 408M126 136Q121 118 106 108M148 319Q152 299 143 281M268 169Q284 158 302 151M121 185Q128 166 133 146M600 421Q607 429 612 439M428 489Q439 479 454 480M101 240Q90 224 74 213M585 479Q571 496 550 503M177 -2Q200 -5 217 -19M165 142Q174 137 177 126M187 102Q195 87 195 71M289 154Q284 157 278 156M17 339Q14 330 13 322M265 67Q284 57 304 46M214 484Q204 481 195 475M457 271Q455 281 447 288M359 67Q369 75 377 84M145 183Q141 171 133 161M529 353Q521 361 517 372M148 251Q135 240 129 224M482 352Q476 349 473 343M15 299Q9 292 3 285M171 165Q181 148 176 129M0 244Q0 237 0 230M285 413Q267 399 265 378M495 -9Q504 11 517 29M559 294Q562 301 564 308M466 532Q456 528 446 529M542 476Q541 464 535 453M44 368Q64 358 70 337M618 0Q629 3 633 13M569 381Q564 359 553 339M375 165Q386 163 395 155M484 -9Q487 1 493 10M123 173Q126 168 125 162M600 399Q587 407 573 404M470 61Q476 58 484 58M283 321Q263 316 243 318M552 279Q575 272 596 282M578 437Q561 445 545 452M401 213Q403 202 407 192M250 511Q249 505 251 499M209 77Q201 83 191 81M523 359Q511 339 502 318M13 99Q9 93 2 90M518 184Q518 196 527 204M31 530Q11 541 -10 537M380 430Q366 431 353 431M544 326Q545 340 555 349M429 270Q421 257 408 249M630 150Q634 159 633 168M93 349Q98 343 100 335M119 443Q97 439 77 429M101 490Q81 499 66 514M172 446Q158 434 140 427M170 523Q163 521 158 516M578 21Q586 40 580 59M328 514Q310 517 298 530M233 35Q241 19 242 0M174 412Q160 401 150 386M308 155Q307 149 304 145M285 362Q281 348 272 336M442 102Q440 116 448 128M426 390Q414 403 401 414M109 65Q113 58 119 55M124 517Q116 529 119 543M361 269Q367 251 368 231M274 520Q273 511 270 503M37 463Q21 457 12 444M359 497Q341 498 324 490M449 -18Q467 -9 488 -9M409 273Q390 273 372 275M287 369Q278 362 272 353M95 231Q97 209 112 193M-16 -9Q-22 -21 -22 -35M357 238Q353 227 356 217M507 32Q521 22 539 18M0 6Q11 -11 28 -26M254 319Q273 308 286 290M115 83Q112 62 115 40M3 203Q11 200 14 193M331 40Q345 35 359 40M249 191Q268 199 288 191M265 402Q265 382 254 364M595 480Q595 466 593 451M137 169Q119 168 102 163M621 440Q614 444 606 443M26 469Q25 446 28 424M100 443Q79 448 65 464M304 75Q305 68 308 62M435 59Q441 56 446 53M62 408Q78 388 103 383M76 483Q52 477 36 458M310 223Q321 215 330 205M17 198Q35 186 58 185M529 425Q537 444 553 456M524 238Q513 244 502 246M469 172Q470 184 462 192M569 8Q569 20 574 31M15 530Q5 530 -3 533M554 328Q531 325 510 334M233 494Q219 486 214 470M186 76Q190 84 199 87M486 121Q497 123 507 129M20 387Q43 389 61 375M400 415Q396 402 398 390M334 415Q345 397 363 386M347 -6Q360 3 361 20M451 239Q445 249 439 260M606 258Q600 265 595 273M405 291Q394 283 384 275M219 126Q215 109 204 95M363 386Q339 384 323 365M535 449Q522 450 511 459M221 26Q240 25 254 11M420 144Q434 154 444 169M583 110Q573 119 564 129M584 271Q580 281 575 290M498 66Q504 68 510 67M235 108Q239 95 241 82M280 335Q262 320 242 308M155 361Q155 352 155 343M532 120Q539 130 536 141M500 -7Q521 4 534 25M565 46Q570 51 575 58M470 376Q458 383 452 395M533 458Q534 474 528 489M240 39Q259 47 277 57M405 156Q426 159 445 166M436 264Q425 264 415 266M285 242Q264 232 253 212M535 246Q549 262 551 284M590 443Q604 447 618 453M554 209Q571 219 591 223M412 5Q424 8 437 9M112 246Q108 228 114 211M89 163Q73 151 69 132M129 157Q110 173 86 169M333 4Q325 5 319 3M60 211Q50 200 49 185M462 95Q481 84 502 90M394 16Q417 17 435 3M383 511Q374 535 350 545M236 224Q253 222 269 214M391 411Q383 410 376 407M106 156Q89 154 77 141M372 142Q380 133 391 128M70 76Q88 70 97 52M128 123Q135 113 134 101M121 208Q120 202 118 196M275 530Q266 522 254 517M229 415Q233 402 225 389M486 214Q481 223 483 232M24 82Q26 65 28 48M97 116Q88 96 83 75M118 138Q99 126 91 106M28 127Q41 117 57 119M122 276Q113 253 123 231M364 427Q362 444 355 460M247 133Q254 121 265 113M284 333Q279 326 277 317M529 289Q527 311 515 330M385 -6Q402 4 421 11M440 293Q429 289 417 290M257 342Q258 333 257 324M-2 104Q-22 97 -42 89M330 62Q339 52 344 38M95 411Q82 399 80 381M587 47Q593 54 597 62M80 315Q66 304 48 305M543 508Q525 501 510 489M65 -14Q74 -23 82 -33M524 484Q509 474 492 465M488 87Q494 88 500 92M182 356Q193 353 203 345M282 99Q304 89 317 68M530 249Q526 262 522 276M370 223Q368 219 366 214M179 215Q197 204 209 188M364 89Q376 88 386 96M420 124Q410 145 410 168M71 243Q80 222 85 199M149 271Q141 249 127 232M231 288Q229 269 216 258M3 150Q15 144 28 138M588 157Q601 174 622 182M579 168Q575 176 567 179M286 501Q284 511 276 517M-1 233Q-1 219 4 207M251 98Q258 94 265 94M437 294Q425 298 413 299M471 181Q480 184 487 192M172 92Q180 81 193 76M567 518Q564 536 566 554M619 30Q631 23 644 26M391 494Q384 501 375 500M383 17Q389 3 397 -9M169 303Q167 293 168 283M348 38Q347 30 351 22M543 228Q541 250 549 271M33 162Q25 150 13 142M313 267Q323 267 332 265M532 423Q530 430 530 437M358 23Q373 20 385 9M252 162Q273 149 297 151M583 282Q572 294 565 308M273 22Q277 29 282 35M485 253Q464 249 444 246M99 81Q115 70 125 54M218 375Q196 376 180 361M111 199Q116 179 118 158M453 8Q469 13 486 14M420 182Q434 190 448 200M449 223Q450 240 453 256M409 475Q402 475 395 473M69 155Q77 134 81 112M230 117Q230 103 232 89M163 92Q165 85 167 78M127 -9Q134 -8 139 -13M314 362Q308 357 300 355M209 -7Q208 -23 210 -39M254 451Q241 440 225 432M-13 72Q-10 58 -16 46M276 3Q282 5 288 2M400 268Q390 256 374 251M550 267Q542 277 541 290M299 260Q305 250 304 238M400 81Q406 67 418 57M160 473Q143 463 124 466M47 112Q56 107 66 104M21 518Q9 507 -7 503M85 383Q61 381 38 389M257 243Q253 224 241 209M29 464Q37 444 35 422M97 294Q113 281 133 277M19 441Q30 442 39 436M458 385Q456 395 449 401M-17 454Q-16 446 -17 438M110 101Q121 105 131 109M339 128Q353 115 366 101M381 117Q389 115 394 109M256 472Q247 455 230 444M45 -14Q62 -27 81 -38M363 357Q344 357 329 369M23 404Q14 404 6 401M370 366Q364 357 354 354M593 72Q598 85 608 96M606 404Q600 397 592 393M62 344Q49 324 47 299M14 -2Q29 -9 45 -5M267 11Q278 17 289 15M576 402Q563 416 546 423M363 419Q355 416 351 408M520 518Q513 522 511 529M97 275Q100 267 97 260M396 46Q408 54 416 66M553 267Q558 273 562 280M92 94Q107 75 119 56M594 200Q589 205 582 205M494 362Q489 382 495 401M13 516Q8 493 13 470M611 402Q610 409 604 414M382 434Q368 446 359 461M371 317Q366 323 364 329M347 459Q323 469 299 461M-10 322Q3 317 16 321M198 441Q193 425 179 418M231 84Q237 98 234 114M104 475Q105 450 121 431M47 336Q41 318 49 300M37 492Q37 477 45 464M379 152Q391 151 402 149M98 61Q99 55 103 51M413 179Q416 183 416 189M-8 195Q-11 188 -16 183M136 67Q146 50 156 33M188 507Q182 501 174 500M157 209Q161 190 171 172M190 146Q198 140 200 130M106 33Q120 24 124 7M456 318Q446 320 437 322M258 253Q236 250 215 241M499 208Q494 218 496 228M149 464Q140 445 129 428M175 397Q176 392 179 387M468 460Q466 473 475 484M322 9Q336 7 350 3M138 192Q137 176 144 162M79 177Q89 175 95 167M301 52Q309 47 319 49M291 391Q280 390 270 387M334 276Q329 265 333 254M480 233Q476 238 471 242M543 146Q557 145 571 146M281 449Q270 454 262 463M380 213Q381 197 391 184M406 47Q422 40 439 38M46 448Q50 438 59 431M272 416Q257 397 254 374M158 45Q143 36 134 20M300 217Q298 202 298 187M152 -5Q140 -15 128 -26M11 522Q18 500 10 479M-1 263Q-12 252 -27 249M392 61Q387 38 402 18M33 177Q26 166 14 160M299 162Q306 158 309 149M509 431Q509 437 507 442M597 45Q610 49 622 57M281 490Q279 479 274 468M367 29Q382 11 386 -12M385 191Q387 176 378 164M485 380Q467 381 450 377M73 182Q80 170 89 159M597 95Q616 107 630 124M330 -15Q330 -21 330 -27M209 233Q207 227 206 221M90 176Q109 178 128 177M499 508Q482 506 468 495M542 513Q538 517 536 522M289 531Q284 552 272 569M381 350Q395 333 411 317M526 46Q541 55 554 66M288 196Q290 184 283 174M182 29Q195 33 208 28M239 160Q243 141 232 126M330 477Q311 482 295 494M450 138Q456 143 460 150M366 85Q371 91 376 97M228 93Q239 78 254 64M443 289Q441 300 439 312M325 67Q329 43 349 30M270 418Q261 422 251 420M383 312Q366 309 350 304M260 73Q273 60 287 48M402 217Q413 214 425 214M286 466Q266 454 259 433M392 120Q406 116 417 107M528 523Q526 532 519 538M73 -4Q83 -11 88 -23M322 35Q329 37 336 33M482 16Q493 26 494 41M449 101Q447 109 440 113M-16 70Q-6 57 0 42M617 324Q621 346 634 364M584 404Q596 417 610 428M587 11Q598 8 608 13M535 445Q526 422 504 410M559 393Q550 390 543 383M548 296Q547 309 548 321M534 431Q540 453 530 474M401 354Q383 358 366 354M547 229Q553 243 554 257M397 56Q400 48 399 40M307 256Q286 251 265 257M407 297Q387 292 368 284M483 502Q472 508 459 511M104 225Q103 202 100 180M26 402Q32 394 40 390M260 279Q262 265 262 252M501 534Q496 532 491 530M609 346Q599 337 585 336M352 18Q356 23 356 28M559 522Q553 538 545 553M278 413Q263 394 242 383M620 128Q635 136 649 146M130 348Q133 335 126 324M382 114Q393 106 406 103M26 127Q20 109 24 90M270 173Q267 157 257 145M199 45Q218 40 236 30M336 300Q330 280 312 271M445 200Q459 203 471 209M603 441Q588 455 571 470M406 220Q429 226 449 213M215 5Q231 0 241 -13M3 414Q-5 406 -17 405M442 206Q449 212 458 211M272 291Q262 270 264 248M490 132Q499 130 508 132M69 98Q59 96 52 89M144 44Q147 34 152 24M613 228Q601 247 602 269M507 118Q507 133 518 143M317 26Q333 14 348 0M124 15Q122 10 125 4M82 438Q78 424 66 419M-18 317Q-5 304 5 290M252 414Q232 415 213 414M41 231Q44 215 44 198M352 117Q372 104 385 85M415 395Q392 402 377 422M529 393Q520 395 513 400M609 344Q597 353 588 364M126 439Q122 430 115 424M240 495Q235 499 229 502M371 412Q347 412 331 395M281 -15Q294 -32 316 -36M435 200Q451 202 466 204M368 66Q373 63 378 60M525 154Q528 170 542 179M237 167Q250 185 271 190M305 22Q326 28 343 41M530 382Q535 386 540 390M-9 458Q3 435 -5 411M321 274Q311 264 297 264M249 504Q239 492 223 492M412 148Q431 139 444 125M485 -18Q491 -9 499 -1M622 21Q619 31 618 41M8 318Q-6 312 -20 305M563 221Q567 239 575 256M308 138Q312 134 318 134M575 144Q580 154 585 165M316 113Q323 125 336 129M-4 103Q-14 90 -24 78M232 354Q209 355 187 353M67 12Q72 -4 86 -14M-14 2Q-4 -4 4 -13M298 166Q315 152 330 136M108 446Q92 458 71 457M548 507Q527 505 505 502M25 390Q29 368 34 345M269 499Q269 491 269 484M448 331Q434 342 431 359M45 433Q34 425 20 420M414 127Q425 122 437 121M98 149Q103 144 110 142M212 161Q223 160 232 151M21 238Q18 227 22 217M112 29Q109 20 113 11M228 372Q220 371 213 370M419 493Q408 502 394 504M496 209Q496 215 500 221M464 81Q469 75 471 67M588 341Q607 325 633 327M312 159Q308 135 291 119M324 456Q318 450 318 442M344 34Q358 18 372 2M195 467Q186 456 179 443M365 280Q347 294 328 308M388 411Q372 395 362 374M406 415Q401 408 395 403M127 293Q143 301 160 301M78 148Q78 136 71 126M515 428Q494 438 473 431M210 91Q215 109 224 126M101 132Q109 124 111 112M405 142Q411 140 417 144M313 87Q314 69 302 56M240 293Q228 273 211 258M115 301Q113 294 115 287M11 366Q-7 354 -15 333M165 308Q169 285 155 267M497 454Q483 464 472 477M520 468Q514 481 513 496M418 -17Q424 -18 428 -15M560 505Q548 516 533 523M620 140Q641 134 662 140M411 144Q408 131 413 118M185 459Q186 452 183 445M621 530Q602 541 580 539M420 209Q420 201 424 194M161 49Q155 44 147 40M14 390Q0 390 -11 397M363 61Q373 68 386 71M340 184Q344 178 349 173M70 366Q61 352 48 341M365 194Q391 190 406 168M336 249Q340 240 340 231M390 214Q368 213 349 200M481 358Q475 359 469 361M429 25Q443 39 452 57M-2 5Q-3 -11 8 -23M2 146Q14 140 18 128M368 502Q361 494 350 494M245 8Q258 -7 269 -24M248 110Q259 93 279 87M344 234Q344 225 340 216M299 370Q297 353 304 338M420 53Q427 50 434 53M305 47Q322 43 340 43M438 247Q430 256 428 269M74 88Q78 80 78 71M111 170Q109 154 119 141M290 89Q284 78 278 67M217 435Q215 424 217 414M144 436Q138 435 135 431M538 26Q545 29 553 33M517 362Q523 376 529 389M53 497Q62 515 55 535M226 122Q229 114 231 105M19 -18Q40 -16 57 -28M320 426Q314 442 316 460M11 96Q5 75 2 53M140 433Q126 433 112 427M366 51Q386 42 395 22M198 485Q194 467 186 450M420 521Q406 515 390 516M259 327Q238 322 217 319M450 397Q427 398 403 399M89 124Q112 127 136 127M390 218Q380 210 368 206M44 394Q40 389 35 385M292 407Q271 402 251 411M118 206Q118 182 128 160M83 491Q83 483 85 474M83 235Q78 231 77 224M600 253Q595 266 584 276M598 357Q589 366 576 366M489 159Q492 166 497 172M88 290Q86 273 86 255M-7 100Q-9 86 -20 75M9 172Q-2 164 -15 159M-6 187Q-2 176 -9 166M622 369Q630 378 640 383M341 358Q321 371 310 393M-8 71Q2 63 13 56M-11 330Q-24 322 -39 325M218 43Q241 45 261 33M609 296Q593 303 575 301M575 76Q595 60 620 64M467 93Q478 77 497 72M115 501Q118 492 114 484M152 308Q153 287 155 266M131 493Q125 481 113 476M119 495Q124 488 127 481M479 13Q479 5 483 -1M240 178Q263 177 282 191M-8 52Q-8 45 -10 37M215 523Q189 526 170 510M198 -19Q207 0 223 15M307 270Q291 270 276 266M619 452Q595 446 574 459M191 487Q183 474 171 463M231 152Q221 141 207 132M260 42Q265 40 269 36M569 220Q564 243 573 265M582 442Q589 451 593 462M567 408Q544 399 521 406M529 308Q519 303 508 299M468 151Q475 157 483 160M36 145Q36 130 44 118M188 302Q176 290 160 283M295 340Q296 334 295 328M253 267Q256 244 241 226M602 330Q596 343 589 354M93 266Q75 251 52 244M80 310Q89 296 95 280M450 492Q444 490 440 485M357 381Q351 374 352 364M176 188Q175 164 182 142M308 213Q318 195 327 177M270 151Q267 130 250 117M579 177Q592 177 604 183M553 1Q559 17 573 26M158 99Q175 89 183 72M503 266Q486 253 465 250M117 64Q120 57 118 50M301 33Q311 15 331 9M460 471Q440 460 432 439M393 14Q415 18 428 35M281 447Q284 442 285 436M624 236Q640 246 647 263M93 470Q87 464 81 458M304 183Q286 174 280 156M251 89Q267 72 288 62M528 175Q513 172 499 177M70 15Q62 11 57 2M256 508Q244 498 230 491M303 266Q288 259 277 248M310 24Q323 36 340 38M164 134Q178 142 189 155M376 156Q371 141 378 127M366 83Q363 59 346 40M606 127Q619 136 635 137M208 462Q200 462 192 465M305 142Q309 134 317 129M582 0Q585 5 590 8M70 224Q59 219 55 208M1 395Q0 378 -12 368M111 26Q118 8 125 -9M492 39Q504 42 517 42M142 286Q145 280 149 275M216 316Q215 308 215 299M589 479Q585 486 579 490M507 291Q495 304 477 311M79 178Q96 164 112 150M445 368Q446 361 448 354M-14 504Q-28 496 -43 498M222 233Q226 215 224 197M117 18Q128 20 139 16M83 283Q93 268 110 260M399 101Q416 99 434 99M581 12Q580 27 586 42M93 32Q104 26 113 17M114 454Q99 457 90 470M416 205Q429 187 448 175M17 137Q23 129 32 129M551 99Q552 107 558 112M495 97Q494 109 498 121M348 303Q342 293 333 285M324 475Q305 470 285 474M297 298Q301 280 292 264M359 334Q352 326 348 315M186 239Q191 225 188 211M288 340Q284 350 275 355M338 -1Q353 -3 363 -16M277 256Q271 255 266 258M26 37Q27 21 30 6M328 113Q350 114 370 105"/><path stroke="#3e3e3e" stroke-width="0.9" d="M524 244Q531 248 538 252M579 199Q594 198 603 188M360 482Q372 463 378 441M444 97Q460 103 476 98M624 29Q633 38 636 51M181 22Q186 20 190 16M383 502Q372 510 365 521M357 -8Q371 -20 389 -20M388 239Q377 232 374 220M181 103Q190 98 196 90M99 134Q103 117 117 105M465 445Q452 453 437 455M249 502Q239 496 229 489M255 242Q255 237 258 233M194 48Q196 30 201 12M557 420Q542 409 525 400M58 449Q75 435 82 414M3 406Q-13 397 -21 379M97 118Q88 101 84 82M467 489Q453 493 442 501M600 144Q594 156 597 169M214 159Q221 153 221 145M35 31Q45 27 56 26M223 409Q216 401 206 396M348 81Q364 88 381 91M368 288Q354 285 346 273M446 399Q427 393 411 383M511 396Q506 402 501 408M279 87Q279 81 278 76M400 226Q416 209 421 185M371 495Q353 502 334 504M221 274Q227 266 228 257M453 132Q464 142 470 155M153 432Q141 429 134 419M424 518Q418 518 414 514M3 9Q10 -11 26 -27M613 245Q611 267 600 287M457 444Q437 455 415 460M249 107Q259 96 264 83M609 102Q615 114 626 122M373 418Q366 412 358 410M547 172Q561 171 573 179M523 310Q524 319 528 327M458 215Q456 233 468 246M79 404Q102 396 125 394M493 262Q483 274 468 280M89 -10Q112 -9 133 -15M584 432Q579 444 575 456M91 81Q77 61 69 39M0 299Q-11 307 -26 311M496 531Q482 533 467 536M267 61Q271 51 276 40M327 390Q327 368 320 348M166 85Q175 71 187 60M313 220Q315 201 303 186M619 347Q622 356 619 365M547 100Q565 116 569 139M446 168Q449 185 460 197M560 471Q555 496 563 519M349 118Q349 103 352 87M101 297Q99 288 102 280M621 419Q602 407 579 404M222 4Q240 -5 259 -3M334 351Q336 343 332 335M276 532Q266 530 258 523M612 36Q616 48 623 58M350 127Q353 111 355 95M44 495Q34 480 15 478M464 275Q454 285 446 298M582 214Q594 225 607 234M-1 149Q5 143 13 136M147 178Q162 166 182 163M468 182Q478 187 483 196M374 337Q372 330 368 324M291 190Q299 180 305 167M74 99Q79 86 73 73M204 343Q208 334 217 329M273 242Q274 233 267 226M226 39Q240 32 244 18M420 466Q418 473 420 479M39 27Q40 17 46 8M445 0Q467 -7 491 -4M438 393Q419 400 399 397M531 227Q514 234 502 248M265 196Q266 178 260 160M409 314Q396 321 389 335M295 226Q296 217 295 208M170 327Q173 313 180 300M76 218Q71 214 65 214M527 498Q511 495 496 486M60 80Q63 74 63 67M237 467Q222 457 213 441M219 218Q220 196 212 175M522 530Q509 533 497 529M472 299Q462 293 455 284M106 386Q104 369 102 351M619 41Q641 52 665 48M0 420Q-15 420 -31 415M383 49Q386 58 389 68M471 193Q478 197 487 196M364 173Q352 155 347 135M276 479Q267 477 258 479M545 325Q535 318 532 306M601 241Q591 236 580 238M50 471Q49 464 52 459M391 454Q375 466 355 467M336 93Q347 92 358 90M322 398Q315 403 308 408M409 485Q389 493 368 487M621 276Q619 287 622 298M7 245Q14 230 23 216M396 340Q383 346 373 357M185 475Q177 465 165 462M65 288Q50 284 39 273M514 478Q504 478 496 485M111 75Q121 54 113 33M356 248Q346 243 340 233M76 164Q81 155 78 144M163 138Q170 136 176 139M323 60Q342 51 362 43M157 326Q156 320 154 314M604 517Q602 526 597 535M270 242Q286 231 305 236M145 403Q140 393 143 382M298 216Q315 204 333 195M99 118Q104 107 114 100M370 29Q379 36 391 35M590 52Q580 60 578 72M432 88Q437 94 439 101M173 417Q159 413 151 401M464 478Q456 477 449 474M391 345Q389 340 385 336M528 335Q520 343 519 355M103 305Q107 294 111 283M335 255Q345 250 349 240M489 437Q484 447 485 458M506 2Q527 3 545 -5M379 461Q380 468 378 475M322 20Q328 15 333 11M63 129Q70 124 75 118M431 114Q445 104 462 100M22 513Q36 510 43 497M427 487Q419 478 417 467M177 264Q172 244 170 223M555 77Q561 81 566 87M161 402Q169 388 174 372M349 391Q340 395 330 398M563 154Q579 154 594 152M586 188Q598 203 601 223M533 306Q510 295 486 302M149 354Q152 345 151 335M435 155Q445 169 459 176M286 213Q282 199 287 186M31 197Q27 187 30 177M587 278Q586 301 577 322M18 427Q10 429 3 426M629 351Q627 356 624 360M307 54Q313 30 332 15M-4 425Q-15 420 -27 418M505 -16Q507 7 505 31M374 43Q371 26 371 8M57 113Q59 94 71 79M623 378Q612 376 600 377M57 472Q44 469 30 464M145 417Q154 407 166 402M76 235Q80 220 79 204M74 480Q73 460 79 442M518 482Q514 491 507 499M380 2Q395 -4 411 -9M160 15Q154 10 151 4M30 242Q45 250 62 249M190 241Q197 235 201 226M421 97Q437 112 456 120M390 179Q399 187 407 197M506 255Q515 258 524 259M246 225Q246 209 254 195M565 175Q567 184 575 190M59 197Q65 191 74 192M31 84Q43 82 54 83M483 378Q470 370 457 364M171 202Q160 194 158 181M579 421Q577 428 571 431M589 82Q596 99 611 109M-19 136Q-5 134 7 127M158 347Q151 338 145 329M136 398Q146 391 152 381M125 504Q122 483 122 462M167 77Q171 68 179 63M361 125Q383 130 396 148M190 194Q174 181 161 164M546 238Q534 245 521 243M470 357Q445 352 425 366M180 410Q176 402 170 396M569 342Q563 358 554 373M31 226Q28 218 24 211M101 399Q90 381 85 360M237 418Q230 407 218 404M548 340Q537 355 523 369M473 264Q465 273 463 285M604 293Q603 298 605 303M207 338Q187 337 167 335M517 463Q501 467 494 480M588 256Q591 263 598 265M41 270Q61 275 82 275M505 212Q499 228 504 244M237 226Q245 207 239 188M553 530Q540 534 525 535M565 276Q548 291 542 311M509 531Q493 533 479 526M442 205Q451 204 460 207M7 98Q19 87 34 79M377 163Q382 162 387 159M187 332Q164 329 141 327M448 482Q426 471 403 471M157 55Q164 56 170 53M429 91Q438 94 448 95M155 276Q149 274 146 269M629 -5Q642 11 662 17M512 102Q514 121 527 134M69 2Q81 3 92 1M513 503Q499 487 490 467M593 13Q615 19 629 37M12 386Q7 366 -7 352M560 531Q552 541 552 554M447 91Q454 95 457 102M237 432Q213 427 194 411M300 48Q314 44 326 50M440 423Q428 419 420 410M89 273Q80 269 77 261M527 84Q533 97 537 110M50 420Q42 415 33 412M254 218Q257 205 266 198M177 96Q181 74 186 53M477 367Q472 390 458 407M505 312Q483 311 462 306M214 98Q235 101 249 117M437 497Q421 508 417 526M432 -6Q434 0 440 4M311 515Q313 499 312 484M-14 33Q-4 26 7 22M117 497Q107 493 102 484M9 283Q-1 270 -15 262M207 181Q213 173 212 162M539 162Q546 169 554 176M521 9Q538 12 552 21M127 10Q134 3 144 0M565 173Q546 177 534 191M110 326Q122 333 136 331M-15 167Q-2 165 6 155M278 7Q284 3 291 3M194 159Q195 141 199 124M201 11Q207 11 212 12M126 212Q140 197 158 188M240 316Q229 305 215 298M453 148Q462 146 471 151M278 8Q293 5 301 -8M242 259Q225 254 206 252M0 211Q-2 194 6 179M254 161Q236 150 219 136M398 -11Q407 -2 420 -1M197 284Q192 265 176 253M156 157Q171 145 181 128M129 7Q131 -2 126 -11M81 -11Q84 -22 94 -29M626 317Q616 321 606 324M388 380Q373 387 363 399M20 293Q21 279 23 266M628 170Q634 172 640 172M547 248Q554 249 559 254M250 259Q245 255 240 251M132 187Q136 179 144 174M366 144Q383 133 403 129M-5 420Q-7 397 -15 375M403 108Q409 100 418 94M309 242Q296 235 290 223M434 162Q443 169 454 174M612 146Q629 150 637 165M292 448Q280 431 259 427M297 445Q288 437 278 431M220 230Q210 240 196 241M150 53Q168 42 184 27M287 193Q280 190 276 183M499 236Q489 242 486 254M264 9Q267 5 272 3M381 288Q376 278 365 273M66 22Q67 17 65 12M215 224Q218 217 222 210M106 202Q130 194 152 205M196 264Q201 258 209 258M-7 304Q-14 286 -16 267M569 466Q553 466 542 454M391 364Q380 356 378 342M195 495Q180 503 163 496M246 210Q258 200 272 195M454 362Q452 367 448 371M234 4Q237 -1 241 -7M-7 470Q-9 465 -11 459M59 215Q65 208 68 199M616 76Q638 75 661 75M93 232Q91 222 87 212M623 156Q601 167 592 189M273 179Q262 167 256 152M577 348Q585 356 593 363M272 271Q288 266 302 255M559 338Q574 356 574 379M474 416Q469 407 460 403M517 349Q516 367 504 381M468 497Q452 506 434 504M190 32Q193 20 194 8M252 347Q242 355 228 356M446 296Q437 316 418 328M490 49Q506 65 519 84M55 458Q40 458 26 456M380 179Q386 176 392 178M622 253Q619 259 616 264M497 245Q503 255 507 266M458 43Q478 55 499 66M579 26Q595 31 611 26M415 515Q408 517 402 515M20 309Q32 316 46 317M108 3Q105 -13 109 -30M303 337Q323 323 347 327M211 45Q221 47 231 44M37 99Q44 86 58 81M440 205Q449 208 457 204M116 248Q115 238 113 228M583 231Q572 249 563 268M287 381Q279 372 271 365M442 2Q466 2 484 -10M119 240Q116 214 96 198M261 329Q249 336 236 339M590 13Q583 35 588 57M480 343Q477 349 475 355M205 204Q206 192 208 180M576 168Q561 183 554 204M406 470Q385 472 365 477M509 472Q494 471 481 477M23 388Q20 382 21 376M366 151Q366 141 364 130M321 7Q339 9 356 7M330 369Q320 350 301 339M-3 112Q-9 94 -4 75M187 267Q187 257 184 248M272 161Q272 149 267 138M15 189Q21 181 22 171M598 127Q597 146 598 165M473 254Q478 267 482 281M257 100Q268 82 273 61M106 523Q112 517 114 509M627 531Q620 533 613 534M509 95Q518 100 524 110M458 29Q470 31 481 30M446 212Q468 219 485 236M441 106Q457 120 473 133M524 229Q527 246 518 261M30 401Q14 395 2 381M307 239Q315 227 318 213M533 -14Q545 -28 544 -47M525 61Q531 70 534 80M103 215Q92 204 86 190M527 22Q545 32 563 41M198 108Q215 101 226 86M13 475Q18 466 16 457M223 528Q213 508 192 503M502 345Q492 352 484 361M59 504Q58 490 50 479M118 -5Q118 -28 135 -44M381 415Q372 425 370 438M569 361Q575 368 575 377M442 46Q448 34 461 30M396 311Q401 292 416 279M253 101Q253 80 244 61M500 518Q489 539 473 555M28 144Q8 145 -10 135M369 395Q364 389 356 388M259 515Q248 523 233 522M84 429Q75 428 67 433M294 429Q314 418 320 397M327 1Q343 -3 352 -18M303 493Q293 493 284 489M601 -18Q619 -32 622 -54M430 83Q446 88 462 84M106 -6Q111 -15 109 -24M504 182Q515 180 523 173M246 197Q252 198 257 202M5 112Q-8 98 -7 77M549 498Q548 509 549 520M285 339Q288 315 302 296M181 230Q183 217 175 206M104 282Q89 281 76 273M389 393Q385 385 379 379M124 12Q120 -11 132 -32M206 297Q193 280 183 261M334 520Q316 511 296 507M48 442Q59 426 55 407M202 509Q198 513 194 517M180 170Q182 165 186 161M613 210Q621 227 615 244M392 498Q375 493 357 495M590 77Q607 76 623 70M499 14Q507 27 510 42M115 60Q93 54 75 41M352 -11Q360 -23 373 -31M91 343Q73 330 59 314M612 533Q607 544 597 550M501 -1Q520 13 524 37M203 237Q197 241 190 244M629 109Q632 114 635 120M434 105Q451 113 462 129M7 446Q14 426 31 413M318 319Q301 305 280 308M92 276Q85 255 91 234M389 320Q366 307 342 315M-13 30Q-5 22 4 16M300 -2Q320 1 340 -4M129 180Q150 169 173 171M466 281Q449 286 440 302M493 444Q482 456 482 473M493 506Q482 506 473 501M354 190Q374 179 389 163M67 58Q88 57 104 42M613 276Q606 297 587 308M608 219Q625 224 635 239M-15 388Q-21 392 -22 398M568 85Q575 99 587 110M211 -14Q203 -19 194 -20M110 14Q112 9 114 5M-4 459Q-9 436 -22 416M535 476Q515 486 497 500M202 210Q200 194 202 177M591 526Q574 522 558 516M484 454Q479 450 473 449M180 423Q168 413 156 404M347 183Q349 178 353 174M611 431Q591 437 572 428M60 517Q40 504 18 504M118 75Q112 71 109 64M224 313Q206 306 193 291M517 257Q512 264 512 274M561 195Q578 205 598 200M81 268Q88 265 95 261M0 230Q4 221 0 212M347 197Q350 174 361 154M26 175Q37 163 44 150M347 336Q343 342 341 348M363 477Q359 468 353 460M20 0Q23 -8 26 -16M391 132Q398 132 404 130M525 517Q514 538 520 561M72 285Q82 267 89 249M52 327Q46 318 37 313M397 220Q385 221 372 220M276 15Q294 11 311 5M-11 205Q-10 190 -20 179M329 440Q308 430 296 410M398 100Q420 90 438 73M187 279Q195 274 203 268M385 196Q379 184 383 171M95 230Q91 212 95 194M79 233Q74 215 68 198M30 205Q23 201 18 194M577 321Q560 323 544 321M19 275Q21 263 24 251M205 132Q202 109 188 90M128 503Q111 514 90 519M448 174Q458 184 465 195M42 256Q51 238 70 230M582 241Q595 233 607 222M208 175Q203 157 201 139M456 38Q452 48 446 59M30 219Q49 203 73 203M47 266Q49 257 46 249M263 475Q251 470 239 465M481 526Q464 518 446 516M107 505Q105 497 109 490M11 178Q13 159 14 139M341 238Q340 229 334 223M88 64Q79 60 69 61M177 312Q160 297 138 290M630 493Q617 492 604 488M463 477Q468 488 464 500M151 176Q145 175 139 171M293 156Q275 146 269 125M98 238Q89 232 78 229M620 73Q639 59 661 54M623 69Q646 67 667 56M388 205Q386 198 384 191M165 394Q160 392 154 394M390 172Q408 158 431 158M76 101Q92 81 90 56M554 35Q573 38 591 30M141 422Q129 403 135 381M518 235Q511 242 503 247M13 142Q3 134 -3 123M410 81Q431 83 452 77M339 517Q332 510 322 509M614 526Q594 530 574 535M263 204Q267 192 270 180M605 69Q615 89 621 110M243 262Q247 255 251 248M500 109Q508 110 515 106M93 76Q104 71 113 62M261 -9Q267 -5 272 0M621 427Q617 432 611 436M21 322Q18 312 17 302M520 13Q519 21 518 28M129 177Q132 166 128 156M297 16Q301 20 307 19M547 491Q538 492 529 489M223 431Q203 427 184 423M373 74Q356 59 349 36M430 495Q419 491 408 495M407 -5Q417 -6 427 -8M301 323Q300 314 297 306M383 170Q389 162 398 160M181 171Q181 151 171 133M302 162Q282 150 261 140M4 179Q0 171 4 162M327 207Q332 186 341 166M120 524Q105 511 88 503M407 268Q401 273 395 279M609 412Q593 421 583 437M378 328Q365 324 359 311M269 410Q259 406 249 402M80 303Q80 291 89 282M165 109Q165 104 163 98M541 -13Q555 -29 567 -46M118 100Q125 104 131 109M171 505Q165 487 150 475M269 197Q280 204 292 204M384 93Q385 86 391 81M301 412Q295 415 288 416M575 287Q575 298 572 308M581 359Q562 374 553 396M383 438Q387 432 388 425M228 -9Q220 -25 207 -36M247 482Q232 477 217 474M516 201Q512 208 511 217M370 73Q378 80 388 81M590 5Q604 10 612 22M98 171Q99 154 103 137M317 502Q314 517 315 531M454 181Q476 181 495 170M378 94Q385 90 392 87M393 12Q398 9 404 10M-10 363Q-22 379 -41 384M542 67Q542 79 546 91M454 196Q454 210 462 222M388 377Q382 370 376 363M243 50Q246 29 251 7M90 166Q95 151 109 142M43 392Q48 381 51 369M351 27Q366 19 382 13M54 150Q60 148 64 143M270 395Q261 394 253 400M62 262Q56 259 51 255M168 285Q164 277 158 270M355 225Q351 211 352 196M-10 116Q-3 107 4 101M231 441Q220 458 201 466M304 240Q303 234 306 229M-18 60Q-14 44 -6 29M-2 396Q3 385 14 382M536 248Q544 256 543 268M623 512Q627 523 630 533M364 224Q387 232 411 224M616 159Q621 171 617 185M261 534Q250 545 247 560M543 494Q523 504 505 515M143 12Q144 -1 143 -15M383 353Q369 354 354 354M590 419Q584 426 579 434M284 95Q289 93 292 88M598 465Q593 463 589 460M540 157Q526 173 515 191M171 501Q162 496 152 501M560 353Q558 373 546 390M62 436Q48 436 35 436M416 103Q428 94 438 84M143 240Q139 234 133 231M26 503Q20 517 14 531M14 291Q-3 295 -21 293M149 354Q136 367 119 372M374 128Q379 131 384 129M421 295Q401 292 383 304M407 124Q405 136 410 147M98 188Q91 191 84 195M0 313Q-9 295 -12 274M62 514Q69 502 80 493M152 434Q176 435 200 434M373 -13Q396 -15 412 -31M402 120Q414 126 427 123M306 10Q314 16 324 16M475 172Q483 194 494 215M65 168Q65 162 68 156M-7 70Q8 60 14 42M207 380Q212 373 213 364M94 4Q92 -12 79 -24M51 441Q29 434 8 443M102 273Q103 255 96 238M458 530Q450 539 441 546M1 94Q12 89 19 79M574 277Q556 281 543 296M130 279Q121 266 124 251M-6 25Q-27 30 -48 28M493 461Q473 467 452 474M384 535Q368 524 348 525M154 157Q154 142 158 127M436 286Q422 273 404 271M70 357Q84 339 95 319M422 48Q433 41 445 44M199 65Q194 50 196 35M177 491Q171 493 165 491M514 305Q512 330 495 347M476 359Q467 373 455 384M296 403Q279 420 267 440M377 516Q364 503 345 503M89 171Q103 153 121 138M103 44Q80 37 67 17M219 82Q218 70 213 59M184 236Q174 216 175 194M312 127Q308 116 299 109M363 441Q350 443 339 450M340 7Q343 -14 354 -34M13 95Q9 87 0 83M461 352Q446 369 448 392M-11 70Q-7 48 -10 26M63 435Q54 432 50 424M626 526Q623 548 630 570M552 106Q566 101 580 107M602 443Q590 452 588 468M429 483Q412 483 400 495M508 270Q504 276 499 278M444 295Q432 312 418 327M421 411Q408 410 399 400M314 60Q309 55 308 49M37 313Q36 304 31 296M421 106Q427 96 427 83M200 95Q208 90 217 89M605 223Q615 225 625 223M175 374Q177 365 174 356M46 123Q56 114 67 109M201 514Q191 519 181 521M448 241Q432 238 417 231M506 294Q504 300 498 303M579 366Q567 377 565 393M577 291Q573 300 563 304M59 21Q64 12 65 1M208 372Q183 369 167 349M573 466Q551 458 530 467M118 430Q107 423 104 411M222 117Q231 104 243 93M235 66Q251 49 265 31M65 318Q67 300 81 289M612 302Q597 305 586 316M471 257Q465 265 462 274M535 290Q548 293 556 303M563 175Q545 186 524 186M378 58Q382 43 387 28M495 191Q509 195 520 203M267 18Q261 14 255 12M318 130Q316 117 324 106M154 86Q177 89 198 98M318 375Q306 370 293 367M340 171Q346 170 353 170M308 49Q310 43 309 37M132 397Q118 390 106 379M539 432Q537 438 537 444M467 361Q453 374 433 376M319 490Q318 483 313 478M9 155Q0 153 -7 157M270 450Q262 448 253 446M598 524Q589 516 577 513M492 527Q473 542 452 552M354 445Q347 440 340 434M561 260Q565 280 567 300M480 412Q463 426 445 438M126 310Q121 300 113 292M51 36Q65 15 62 -9M353 311Q348 297 336 288M433 192Q440 184 449 177M20 451Q19 445 18 440M209 40Q230 45 251 38M386 321Q376 330 369 343M540 370Q530 391 517 410M-14 112Q-19 92 -31 75M366 334Q355 320 342 309M552 473Q542 481 535 492M547 363Q529 366 515 378M460 190Q481 203 486 227M397 56Q401 69 411 79M487 215Q494 221 495 231M217 334Q197 323 175 316M256 374Q255 351 266 331M520 440Q505 441 491 446M29 320Q20 314 12 305M504 500Q500 518 484 527M238 261Q225 260 214 253M486 394Q461 402 439 389M505 87Q523 92 541 99M87 100Q107 96 128 97M362 372Q345 381 335 398M440 234Q437 246 443 256M374 525Q377 538 382 551M444 243Q441 261 428 275M190 430Q172 416 158 400M173 366Q160 359 145 357M457 27Q463 23 468 20M611 86Q613 98 616 110M440 514Q432 493 427 470M-10 449Q-14 436 -21 423M168 334Q153 336 138 342M38 244Q37 232 32 221M177 75Q172 73 169 67M425 367Q411 356 398 344M98 2Q100 -13 113 -22M-16 298Q-20 293 -19 286M395 534Q386 532 378 530M462 252Q449 261 444 276M134 43Q114 40 97 30M479 86Q487 104 485 123M557 343Q544 356 540 374M502 60Q521 59 540 56M442 58Q446 39 460 25M-5 239Q-1 233 -2 225M326 500Q314 500 303 506M613 483Q608 495 604 506M626 181Q640 187 647 200M-4 266Q2 250 6 233M375 327Q372 321 367 317M526 84Q541 80 551 68M479 144Q493 142 507 141M530 190Q528 212 533 234M34 461Q35 475 35 490M312 348Q299 336 281 334M460 487Q446 476 429 475M531 213Q534 227 531 242M306 531Q296 520 281 518M573 43Q573 62 579 79M66 60Q79 56 93 57M278 102Q264 84 253 64M228 93Q247 88 260 72M358 493Q349 478 333 470M364 32Q376 29 388 27M239 469Q219 456 194 457M518 142Q534 155 544 174M150 486Q134 476 116 482M314 115Q317 109 317 102M331 86Q338 79 344 71M134 47Q154 53 174 59M336 411Q336 399 343 390M439 454Q434 455 429 454M48 355Q40 357 33 361M348 410Q328 405 307 404M269 90Q276 72 293 64M422 65Q425 60 431 57M262 360Q276 343 297 334M485 389Q466 377 445 367M553 375Q539 382 524 382M10 28Q29 17 51 12M404 26Q407 17 414 10M-18 376Q-30 354 -27 329M587 57Q573 68 556 71M271 517Q262 528 251 536M391 68Q397 59 405 52M263 513Q261 492 254 472M372 48Q381 34 396 30M102 393Q123 387 136 371M395 132Q403 129 411 124M127 418Q114 413 102 419M477 187Q488 191 494 201M380 255Q377 239 367 226M383 452Q384 432 378 413M312 472Q308 467 303 464M397 130Q406 108 420 90M166 111Q182 130 205 138M414 448Q403 449 395 442M132 443Q125 442 117 444M146 534Q132 540 121 550M104 442Q101 433 100 424M167 492Q169 476 169 460M493 38Q491 61 506 79M616 248Q605 269 600 292M538 0Q550 0 562 1M178 517Q171 516 165 515M340 466Q333 468 327 468M465 274Q463 286 461 298M155 94Q150 80 145 67M536 41Q547 51 562 51M84 513Q81 507 83 500M401 104Q406 106 412 109M602 224Q607 240 619 252M197 73Q206 66 212 57M237 262Q226 251 215 240M483 366Q472 378 455 380M175 252Q178 230 188 210M311 187Q316 187 321 186M379 453Q370 439 357 429M611 189Q627 192 643 188M84 334Q79 325 82 315M287 354Q274 359 260 365M423 241Q410 242 397 246M620 441Q609 455 602 471M254 416Q231 408 208 401M544 477Q541 473 536 470M232 25Q234 4 227 -15M5 313Q21 301 31 284M245 314Q238 297 221 290M219 468Q207 459 192 458M505 353Q492 344 484 330M153 39Q155 22 167 10M589 238Q583 241 576 244M158 458Q148 451 144 440M248 374Q247 352 258 334M406 284Q400 305 384 320M349 -5Q359 15 369 35M239 101Q254 108 269 113M361 482Q354 481 348 483M342 459Q335 447 322 439M303 318Q306 309 307 299M60 179Q65 165 78 158M85 445Q79 439 69 438M48 14Q48 8 48 1M299 460Q288 457 282 448M15 70Q20 54 20 38M58 392Q57 382 61 372M285 130Q287 115 297 103M152 218Q158 203 161 187M257 -9Q273 -13 289 -18M264 269Q251 267 239 266M15 45Q20 44 25 47M188 349Q173 332 155 318M416 431Q416 411 406 394M536 91Q551 71 575 65M326 129Q349 118 357 94M185 171Q179 158 178 144M452 312Q436 324 417 325M505 509Q493 505 484 495M465 424Q454 428 444 434M39 93Q28 89 18 86M522 422Q513 443 504 465M-7 39Q-6 20 -20 6M415 289Q394 276 386 253M40 174Q36 160 29 148M591 174Q598 175 605 173M251 95Q243 78 246 59M271 533Q275 509 269 486M540 236Q533 256 521 274M482 192Q485 207 498 216M-9 36Q0 32 5 23M131 277Q136 253 150 235M109 3Q117 -3 120 -13M-19 335Q-27 316 -27 297M351 178Q372 168 395 172M429 509Q440 496 440 480M434 352Q429 343 419 338M42 279Q22 268 10 247M451 372Q432 385 410 382M526 401Q510 400 497 391M514 407Q501 416 487 423M146 -10Q155 -15 164 -19M438 438Q416 430 394 438M50 123Q57 117 67 117M-14 465Q-6 459 -3 449M152 133Q164 124 179 120M297 122Q301 103 301 83M574 -12Q589 -3 605 1M459 440Q452 448 441 450M576 357Q559 370 538 366M400 415Q393 410 384 410M599 377Q582 385 565 379M450 100Q461 109 469 120M-17 310Q-14 294 -7 278M399 217Q417 203 432 185M357 334Q356 326 351 319M113 232Q110 212 94 201M70 305Q75 296 86 291M612 369Q623 381 623 397M612 479Q591 476 575 490M398 211Q408 201 414 187M297 169Q302 146 316 127M468 71Q485 66 492 51M433 505Q439 519 447 532M-9 440Q4 448 9 463M347 200Q362 186 368 167M317 266Q305 245 284 235M154 133Q167 124 184 123M623 489Q618 507 627 524M166 169Q162 158 160 145M501 57Q518 64 533 75M519 329Q514 338 511 348M95 125Q90 109 95 92M74 196Q81 179 88 163M31 314Q29 290 18 269M456 337Q438 352 427 373M205 517Q193 522 180 521M576 418Q567 430 554 439M-10 323Q-13 317 -15 310M148 17Q150 7 150 -2M496 21Q503 20 508 16M473 1Q474 15 472 29M200 323Q194 344 191 365M374 503Q371 491 377 480M10 257Q19 241 34 230M55 317Q37 310 17 309M182 214Q177 212 174 206M402 40Q418 36 434 35M550 462Q543 478 547 494M27 276Q31 271 33 265M53 144Q49 132 45 121M622 107Q622 113 618 118M144 342Q137 323 142 303M172 459Q149 449 125 457M193 208Q189 203 186 197M449 84Q456 74 467 69M598 260Q597 274 602 286M591 268Q608 284 629 293M367 375Q355 366 345 355M88 226Q69 212 46 206M587 244Q595 243 603 240M347 89Q362 74 383 72M48 392Q34 372 10 368M-5 159Q7 141 4 121M592 96Q613 85 637 87M66 59Q73 37 63 17M322 437Q317 435 315 430M455 392Q432 390 410 395M520 260Q498 272 492 296M252 179Q252 174 256 169M255 435Q262 420 266 403M284 -12Q282 -25 276 -38M15 364Q32 361 47 355M228 142Q225 135 226 127M10 105Q1 98 -10 97M295 -15Q306 -28 323 -29M116 327Q121 312 129 297M75 67Q81 52 95 45M592 69Q592 82 597 95M205 283Q208 273 208 263M629 481Q625 485 619 489M103 364Q100 368 95 370M455 381Q442 379 430 375M-15 373Q-17 364 -23 357M353 527Q346 522 338 523M45 82Q64 75 78 60M394 348Q388 354 384 362M393 383Q371 375 348 377M306 432Q288 417 264 415M307 115Q322 103 328 84M328 501Q311 513 290 515M507 233Q496 233 487 229M41 396Q40 390 35 385M200 226Q216 209 220 186M179 480Q159 472 137 475M62 261Q66 280 55 297M439 151Q458 160 478 159M2 481Q-4 478 -7 470M141 12Q156 22 174 22M630 401Q628 412 633 422M165 195Q151 183 146 165M484 483Q476 483 469 487M622 95Q624 101 624 107M5 353Q8 345 6 337M366 117Q370 119 375 121M469 522Q453 513 435 516M41 132Q27 144 10 150M238 243Q226 235 212 233M-9 227Q2 224 11 217M630 431Q624 438 615 439M194 281Q200 259 206 237M600 411Q589 426 573 432M187 488Q187 474 184 460M513 336Q497 351 485 369M394 85Q411 69 414 46M436 475Q434 491 422 501M377 209Q390 200 400 189M190 132Q191 115 181 103M334 101Q344 83 360 71M314 165Q311 143 320 124M76 197Q61 182 42 173M534 482Q520 481 508 473M366 510Q365 520 361 528M387 436Q374 437 361 438M217 432Q209 422 207 409M275 94Q276 76 283 59M223 -7Q245 -18 255 -41M445 238Q452 256 456 275M102 123Q94 102 96 80M536 20Q553 8 567 -7M117 139Q122 116 112 94M246 497Q224 501 208 516M423 377Q415 367 407 356M364 308Q361 299 360 290M372 155Q375 132 373 109M83 226Q85 248 101 261M253 392Q237 387 224 378M4 58Q0 51 -4 43M55 71Q58 60 65 51M551 218Q555 237 543 253M142 166Q147 152 156 140M136 408Q130 384 139 361M259 337Q252 331 243 330M171 58Q167 54 165 49M174 67Q160 48 142 34M267 202Q262 198 255 196M160 130Q164 122 167 112M139 445Q143 431 152 421M141 101Q151 91 165 91M301 413Q308 400 315 388M532 213Q535 227 544 237M627 208Q619 221 609 231M-11 435Q-12 411 -24 389M-12 364Q-22 355 -25 342M530 102Q536 103 543 104M577 523Q566 530 557 540M485 383Q476 376 465 372M49 478Q36 473 23 477M582 131Q601 147 606 170M456 388Q442 368 420 358M281 258Q281 251 285 246M123 28Q130 7 148 -4M297 2Q300 -5 306 -11M35 500Q35 475 18 456M86 409Q96 409 104 403M332 12Q347 -3 350 -25M112 264Q95 249 89 227M367 331Q357 337 345 339M-6 421Q-11 428 -20 431M341 114Q336 95 326 77M398 388Q394 384 388 384M537 305Q522 323 514 344M18 -14Q27 -17 34 -24M267 383Q250 373 237 358M518 474Q508 462 494 453M276 509Q270 516 262 521M146 398Q141 386 128 382M104 165Q117 152 135 148M328 129Q338 107 346 85M616 -18Q625 -25 630 -36M472 34Q467 49 461 65M470 167Q491 167 509 174M207 17Q216 12 227 10M104 279Q102 262 102 246M124 47Q141 55 158 64M-18 343Q-22 319 -39 302M3 18Q0 11 -5 8M562 219Q554 229 540 230M591 178Q588 186 587 195M408 341Q403 334 398 328M453 35Q462 40 471 41M9 267Q2 262 -3 257M100 227Q110 217 124 215M588 338Q579 341 573 348M446 311Q439 308 432 309M30 512Q21 501 16 487M260 323Q260 315 259 307M104 471Q82 477 59 472M373 43Q387 27 403 14M544 171Q531 182 515 187M275 83Q287 93 289 109M171 285Q159 274 151 261M160 59Q158 44 164 30M512 108Q535 107 556 116M218 208Q216 203 211 200M183 364Q175 364 168 367M177 125Q172 112 169 98M603 237Q615 258 610 282M555 146Q562 155 572 159M420 145Q421 153 426 159M498 323Q481 327 464 328M-17 363Q-28 344 -29 322M346 44Q350 65 362 83M63 290Q72 275 86 264M236 77Q247 58 266 48M435 430Q434 448 438 465M518 38Q540 33 557 18M74 522Q56 518 37 520M344 238Q349 215 337 195M233 452Q230 447 225 446M300 283Q304 278 306 271M496 532Q490 521 481 514M226 19Q250 22 268 37M386 445Q380 444 375 445M459 396Q454 398 448 397M129 255Q127 241 124 228M-8 400Q-18 399 -26 392M571 -7Q573 4 573 16M426 431Q429 440 427 450M393 365Q387 350 377 336M96 248Q92 233 84 221M234 497Q220 495 209 485M149 135Q164 132 179 134M106 427Q96 412 82 401M177 261Q185 240 189 217M-13 331Q-3 312 10 295M434 290Q410 291 388 282M267 401Q263 398 259 395M327 15Q341 12 353 6M123 255Q134 234 147 215M66 244Q78 261 90 280M102 93Q119 80 121 59M107 259Q116 244 111 228M60 49Q55 42 56 35M299 89Q299 83 303 79M352 204Q352 197 355 192M363 44Q373 25 392 16M83 429Q75 424 66 418M171 305Q155 298 146 284M123 122Q116 110 118 96M212 22Q206 10 202 -3M330 383Q326 367 332 351M450 247Q447 253 447 260M376 273Q375 253 386 236M420 419Q412 423 404 423M560 39Q572 60 596 66M532 473Q527 489 526 506M428 -10Q431 -22 431 -34M370 164Q385 151 404 143M236 490Q227 470 213 452M586 523Q582 526 578 529M384 531Q361 540 346 559M190 274Q196 262 205 253M11 6Q-7 -1 -24 -15M97 73Q108 64 110 51M87 7Q91 -2 95 -13M628 386Q628 400 634 413M295 149Q310 147 322 137M141 516Q152 496 160 474M412 327Q405 317 393 312M404 309Q395 302 391 291M444 237Q435 247 435 261M71 16Q58 3 52 -13M92 169Q81 167 71 162M416 84Q416 99 409 112M420 115Q436 107 449 94M85 107Q91 90 101 76M573 53Q589 57 602 69M131 244Q138 237 138 227M408 238Q400 241 391 241M536 192Q538 200 542 206M317 417Q301 421 285 426M361 202Q361 196 359 190M366 502Q361 498 358 492M341 189Q324 177 310 161M380 183Q392 180 399 172M248 431Q243 428 237 426M39 10Q40 -7 48 -23M313 140Q314 129 311 118M85 14Q90 6 99 5M39 479Q33 481 27 479M-16 16Q-11 0 -16 -17M452 462Q438 472 420 471M375 404Q357 409 346 423M390 232Q403 236 417 235M-2 427Q-1 416 -2 405M369 291Q362 283 356 274M140 82Q127 62 133 39M157 459Q147 455 143 445M9 364Q2 342 -4 320M37 182Q14 182 -7 177M269 308Q262 287 244 275M56 458Q76 451 94 439M319 363Q304 378 283 382M536 413Q523 417 511 422M193 7Q197 -12 204 -30M609 176Q592 180 577 189M216 455Q225 440 234 426M104 207Q101 202 98 196M168 477Q171 472 174 467M0 415Q4 396 14 378M102 150Q108 147 114 144M100 16Q112 8 126 3M127 515Q117 513 108 507M22 535Q1 524 -21 519M170 370Q160 371 150 369M361 34Q371 37 382 34M82 253Q85 237 85 221M475 342Q462 354 444 354M-2 419Q-21 421 -38 411M275 453Q264 455 253 450M340 533Q355 515 365 494M294 49Q307 49 320 45M44 41Q27 39 9 44M301 240Q294 230 292 218M579 1Q583 7 589 11M47 260Q31 270 12 273M458 94Q470 105 486 105M328 344Q309 343 294 331M555 29Q571 27 585 21M-10 118Q-16 95 -35 83M473 515Q454 513 434 517M198 361Q179 369 157 366M-19 441Q-25 431 -26 419M325 447Q307 443 292 435M393 338Q389 329 388 319M553 435Q545 437 539 443M131 215Q127 209 122 205M327 226Q325 210 319 196M49 356Q43 345 32 342M289 84Q287 75 286 67M544 55Q546 72 559 82M401 391Q393 368 396 345M283 314Q297 296 310 278M-16 374Q-24 362 -36 354M265 190Q265 180 258 174M329 487Q325 493 323 500M577 72Q590 75 603 77M498 530Q491 536 485 542M452 23Q463 25 471 33M148 -18Q144 -15 138 -15M537 394Q527 387 521 377M19 291Q21 273 22 256M468 218Q446 227 423 234M301 -2Q288 12 276 27M65 434Q62 411 55 389M219 167Q213 165 208 162M243 462Q241 452 244 443M12 392Q8 374 -2 360M341 135Q356 129 371 125M224 -15Q217 -25 204 -27M-16 326Q0 309 18 295M550 463Q529 464 516 481M29 261Q33 247 41 234M346 26Q356 21 368 20M270 170Q292 161 311 147M208 116Q215 113 218 106M512 99Q520 101 527 105M292 16Q303 7 307 -6M542 226Q547 225 551 221M524 -9Q544 0 566 4M317 395Q312 378 304 361M572 399Q552 395 533 393M128 8Q147 5 166 0M481 16Q485 28 490 38M382 309Q393 291 396 270M106 179Q107 171 103 164M466 389Q451 396 440 409M193 406Q179 399 165 393M6 39Q7 31 11 25M36 194Q28 190 19 189M415 280Q402 293 394 310M47 229Q66 217 83 204M514 526Q509 533 511 541M14 251Q5 233 2 214M201 458Q201 448 195 439M293 19Q303 12 312 5M54 138Q38 120 32 96M0 -12Q3 -20 12 -23M309 114Q320 105 335 104M235 447Q216 434 199 421M132 241Q144 231 145 215M9 72Q17 68 22 62M460 403Q439 395 419 384M165 280Q158 270 154 258M412 324Q402 305 382 297M424 200Q436 194 446 187M-18 14Q-24 13 -28 10M228 442Q214 444 202 438M425 184Q431 188 435 195M-8 395Q-13 388 -20 383M305 380Q308 370 306 360M330 394Q313 393 296 386M316 472Q318 451 322 430M197 481Q178 488 160 496M-18 75Q-11 75 -5 78M302 -15Q296 -23 291 -30M225 526Q222 511 213 501M286 377Q284 359 270 347M267 349Q247 359 226 351M507 364Q491 362 475 359M517 388Q496 384 475 388M95 295Q94 276 105 260M451 313Q446 306 438 301M210 423Q204 416 201 407M599 199Q584 206 575 221M173 11Q181 1 191 -5M557 71Q552 93 557 116M463 531Q454 538 442 539M517 297Q498 310 485 330M6 165Q17 145 30 127M208 -6Q218 4 233 5M160 471Q154 450 143 431M44 118Q57 97 56 73M571 325Q558 343 560 364M180 379Q174 371 171 362M47 -13Q51 -19 49 -26M331 69Q334 61 339 52M474 37Q493 29 511 21M232 493Q226 469 206 454M472 489Q473 501 465 511M203 160Q204 154 207 149M24 445Q11 425 -5 409M-9 119Q7 105 23 90M523 163Q543 175 547 197M613 44Q615 54 609 62M277 266Q269 261 260 259M277 -2Q263 -22 242 -32M208 144Q207 138 206 132M626 520Q612 512 596 515M108 356Q95 351 83 358M234 119Q243 118 250 111M602 104Q611 95 623 92M400 297Q393 304 384 306M500 204Q520 213 542 211M477 113Q483 109 489 106M320 380Q302 394 279 399M502 486Q486 501 465 503M360 364Q359 346 352 329M113 169Q129 156 149 153M401 29Q395 17 396 4M470 435Q459 441 450 448M227 231Q216 236 205 242M220 427Q230 417 232 402M99 287Q88 279 75 275M500 128Q503 137 509 143M74 170Q81 149 89 128M177 473Q156 462 138 447M165 211Q154 198 139 191M197 431Q195 423 198 416M355 218Q358 209 364 201M224 337Q221 321 217 306M76 336Q74 323 78 311M72 127Q64 112 60 95M481 152Q490 169 501 184M271 100Q262 100 254 103M-1 263Q6 239 27 226M532 450Q518 445 504 440M206 453Q212 441 209 428M587 130Q597 125 609 128M196 436Q194 429 191 423M417 201Q440 198 460 187M285 130Q295 121 296 107M24 183Q29 161 21 139M142 206Q144 186 156 171M290 283Q284 276 284 267M194 333Q171 326 150 339M287 159Q299 152 313 149M506 346Q525 336 546 341M613 368Q614 373 615 379M227 64Q247 54 262 37M433 26Q450 15 469 7M289 206Q274 196 256 199M127 442Q119 421 103 404M402 333Q383 337 371 352M76 311Q66 298 62 283M170 205Q181 194 195 186M534 152Q533 159 528 162M464 265Q449 277 435 289M376 357Q373 349 369 342M-1 50Q-9 35 -4 19M129 404Q118 395 104 394M-13 31Q-2 24 10 21M219 217Q218 208 219 199M159 301Q144 297 130 291M543 6Q552 10 561 10M-1 314Q-10 315 -18 311M147 27Q159 16 170 3M386 505Q373 506 362 513M4 54Q13 42 16 27M421 265Q415 264 411 267M129 170Q140 158 148 143M605 328Q599 346 587 361M544 530Q525 523 504 522M69 307Q57 289 54 267M545 391Q567 402 580 422M84 473Q84 462 75 455M140 236Q141 227 140 217M409 134Q415 137 422 135M187 344Q182 326 176 308M515 69Q514 75 510 80M598 527Q603 534 602 542M66 532Q47 537 37 552M447 281Q439 286 433 294M566 168Q563 186 555 202M66 177Q63 172 63 167M277 377Q290 358 312 352M185 235Q162 234 139 235M431 467Q418 454 406 439M554 457Q539 461 524 463M231 297Q227 289 220 284M489 221Q490 232 485 241M89 129Q95 124 99 117M40 309Q33 300 23 292M173 297Q148 292 134 270M266 201Q277 198 288 200M260 131Q277 124 287 108M97 236Q85 230 73 222M157 59Q143 55 132 44M310 279Q301 258 293 237M380 295Q380 283 388 273M531 81Q530 88 528 95M533 417Q508 416 486 428M79 7Q65 -5 46 -10M8 70Q22 68 35 70M23 -13Q28 -18 31 -23M299 422Q290 401 295 379M40 250Q43 232 48 214M517 155Q517 176 513 196M63 179Q70 158 69 137M307 126Q300 111 307 96M436 435Q427 439 417 439M14 70Q10 59 8 47M168 43Q157 37 145 39M235 367Q226 364 217 365M384 -8Q393 -5 400 1M162 265Q145 268 132 280M230 -4Q232 -9 236 -14M116 324Q112 311 104 301M456 281Q435 288 415 281M352 410Q361 389 360 366M383 80Q386 95 387 109M403 367Q397 380 400 393M584 151Q576 169 578 187M-8 151Q9 136 32 130M502 102Q502 91 508 82M600 176Q611 182 617 192M200 424Q204 401 218 382M560 375Q561 389 569 399M340 60Q349 62 358 57M560 522Q540 536 517 542M60 237Q68 217 84 204M111 455Q115 444 111 433M489 9Q494 4 500 0M602 149Q607 157 613 165M547 270Q544 293 538 315M15 191Q9 180 11 168M84 492Q88 477 91 461M157 19Q173 37 196 44M259 187Q270 180 277 169M317 81Q325 72 336 67M333 348Q326 343 318 343M200 77Q211 67 221 55M395 363Q393 349 383 339M141 318Q141 310 143 302M342 473Q323 470 308 457M237 24Q249 20 260 18M513 23Q523 35 536 44M549 127Q546 133 543 138M344 159Q356 162 368 164M391 518Q379 537 368 556M377 234Q392 226 409 230M545 329Q538 331 530 332M391 42Q399 34 403 24M264 346Q249 343 235 338M456 376Q455 390 447 400M278 250Q291 254 304 252M102 296Q124 301 143 314M209 81Q207 62 217 47M509 -9Q515 -3 523 -1M217 180Q199 164 190 142M508 240Q502 260 502 280M623 534Q614 528 606 520M498 206Q493 218 485 229M515 8Q536 17 548 36M618 432Q612 441 611 452M251 354Q251 338 244 324M388 361Q381 364 373 366M24 205Q20 182 30 162M601 531Q591 516 577 505M415 -16Q417 -9 413 -3M58 355Q55 332 64 311M518 471Q504 474 489 477M581 441Q600 455 615 472M589 89Q608 88 624 97M-16 258Q-23 252 -32 250M480 494Q476 518 480 542M113 203Q101 196 88 190M353 7Q355 -3 354 -14M377 33Q398 33 420 37M163 201Q145 200 131 188M319 513Q297 513 276 519M574 345Q556 362 532 369M-3 210Q-3 205 -5 199M158 366Q148 363 140 356M227 3Q230 -9 242 -17M272 362Q262 360 252 360M98 185Q96 177 91 171M119 52Q133 32 156 25M563 327Q553 344 544 362M463 82Q471 82 477 88M191 170Q181 159 183 144M628 230Q613 249 609 272M321 442Q312 441 305 446M382 465Q378 461 376 456M535 257Q519 253 505 263M65 48Q70 41 71 32M492 395Q471 395 452 401M225 269Q218 249 200 237M308 102Q320 108 325 122M24 297Q30 292 33 284M531 179Q542 183 554 187M21 71Q44 70 64 81M15 10Q21 -7 16 -26M294 207Q278 190 256 180M272 142Q295 139 319 140M455 49Q463 58 475 61M496 325Q480 326 468 315M300 420Q276 424 253 419M434 303Q420 307 406 313M195 49Q201 44 208 46M587 404Q570 421 551 435M276 341Q265 336 257 327M334 11Q349 14 363 6M107 527Q92 532 76 534M386 -18Q394 -42 417 -55M190 247Q169 241 157 223M397 -2Q412 -7 426 -16M438 384Q435 370 434 355M285 287Q270 277 253 279M152 473Q153 467 157 463M460 447Q457 435 462 424M288 284Q292 273 288 263M580 182Q581 193 589 199M551 390Q537 403 524 416M587 437Q578 440 573 449M619 463Q621 476 619 489M20 461Q27 458 35 457M365 368Q351 370 341 381M205 6Q196 -7 192 -24M267 268Q273 247 262 228M238 106Q255 97 272 89M93 144Q94 138 99 133M153 236Q165 255 186 263M619 416Q621 437 620 457M2 458Q1 445 3 432M223 1Q242 0 261 -4M301 121Q290 110 276 102M110 309Q122 330 141 344M6 95Q-8 87 -24 82M326 341Q315 320 308 297M90 49Q90 35 88 22M498 366Q503 382 510 398M514 305Q498 317 479 324M110 239Q129 223 130 198M15 462Q24 447 40 440M601 38Q598 52 594 65M432 210Q432 229 445 242M571 396Q556 402 550 417M71 49Q92 61 115 70M277 126Q293 112 311 100M275 157Q279 147 283 137M548 87Q546 100 550 112M332 531Q318 534 304 537M619 171Q616 181 607 186M560 171Q580 168 597 177M52 358Q34 361 16 354M582 523Q572 521 563 514M198 504Q187 497 180 486M577 147Q572 151 565 151M63 127Q59 120 57 113M332 103Q333 79 350 63M411 362Q405 351 393 347M482 116Q498 128 517 137M155 173Q158 168 160 164M182 189Q189 197 190 208M601 344Q610 355 616 368M150 63Q167 72 185 80M198 168Q199 158 194 149M390 37Q385 28 382 18M380 456Q369 474 350 483M103 299Q105 284 107 271M389 283Q380 278 376 268M416 479Q404 488 389 488M18 269Q-2 271 -23 263M507 195Q529 197 551 195M361 483Q354 479 346 482M417 120Q424 119 432 122M565 322Q553 343 559 366M603 161Q615 164 627 167M364 404Q359 406 354 408M20 69Q39 61 54 47M590 1Q612 5 633 10M171 86Q167 83 164 79M595 397Q586 402 578 408M234 237Q247 217 251 193M192 325Q191 319 187 315M548 495Q548 503 546 510M1 87Q11 72 9 53M466 463Q450 451 431 446M0 153Q11 139 13 121M166 246Q155 236 150 223M598 50Q601 71 619 82M92 -14Q98 -15 103 -18M492 24Q483 39 482 57M449 447Q435 430 416 421M166 356Q160 349 151 347M164 175Q143 178 124 169M257 14Q249 11 242 7M625 97Q623 104 625 111M373 209Q386 204 399 205M302 210Q321 196 341 183M111 36Q93 33 76 24M104 90Q110 82 114 73M475 478Q453 475 431 471M61 483Q48 476 33 473M486 202Q489 210 485 218M589 239Q604 252 616 268M329 397Q324 383 311 375M505 144Q520 151 525 167M520 85Q527 101 523 117M214 145Q207 140 198 137M619 458Q610 480 594 497M334 392Q331 378 340 367M-9 252Q-18 244 -28 237M312 477Q310 461 304 446M575 105Q583 95 596 91M195 351Q180 337 164 325M151 518Q141 523 133 530M446 369Q438 368 431 367M448 443Q457 464 452 487M228 270Q212 276 195 278M27 68Q42 59 58 52M89 383Q86 377 81 373M566 27Q581 30 597 31M0 400Q-3 379 0 359M430 465Q416 465 405 456M580 4Q589 0 600 2M25 162Q32 151 36 138M578 110Q566 119 554 127M135 128Q150 131 164 125M298 431Q292 428 288 423M115 113Q132 109 150 108M626 120Q621 131 626 142M468 477Q458 472 448 467M326 28Q333 32 340 31M206 40Q192 22 190 0M433 383Q424 389 418 398M531 63Q546 68 554 82M260 87Q276 78 290 67M468 325Q467 336 469 346M59 373Q61 356 62 339M323 472Q304 457 280 461M81 234Q84 215 78 196M135 330Q120 312 123 289M218 487Q209 486 200 485M200 294Q195 299 196 305M39 -8Q45 -21 56 -32M140 234Q144 216 147 197M48 437Q38 435 30 430M191 370Q182 348 164 332M430 455Q431 444 424 435M322 16Q327 8 336 4M75 23Q71 1 78 -20M54 117Q68 105 74 88M-2 203Q16 214 37 219M220 110Q221 105 225 100M400 199Q401 186 405 174M424 405Q434 427 428 451M401 87Q413 69 424 51M577 271Q565 288 554 306M159 503Q153 500 148 497M474 499Q456 507 444 522M596 168Q596 189 586 206M477 91Q493 94 510 95M109 476Q109 453 111 431M189 513Q167 510 146 514M373 394Q378 380 372 368M596 46Q609 66 614 90M555 73Q560 82 563 92M441 343Q434 343 430 348M327 110Q345 120 364 126M441 409Q429 409 420 417M442 141Q446 137 451 134M619 326Q607 346 590 362M338 145Q352 135 356 118M170 455Q166 443 159 432M209 478Q199 469 186 467M370 98Q363 91 361 80M25 390Q18 396 9 397M370 508Q369 501 368 493M293 5Q310 6 323 -5M-4 235Q-19 224 -32 212M189 79Q201 80 213 81M410 269Q390 256 366 261M235 141Q258 138 275 124M299 102Q280 88 272 65M270 438Q265 437 260 437M139 535Q141 512 134 491M246 422Q245 413 238 408M559 40Q571 50 587 51M113 459Q105 457 96 457M620 320Q605 320 594 309M464 453Q453 468 435 472M477 507Q456 510 436 501M517 144Q524 144 529 140M492 383Q474 382 460 371M362 104Q367 102 373 103M584 221Q588 229 595 235M275 135Q291 140 306 135M26 240Q20 234 13 227M354 5Q366 14 380 19M195 50Q207 34 220 19M244 162Q237 141 236 119"/><path stroke="#5a5a5a" stroke-width="1.0" d="M176 -2Q179 -8 180 -14M86 458Q81 467 78 477M171 407Q169 405 167 403M81 3Q87 5 91 2M19 355Q14 356 10 357M253 207Q255 211 259 212M622 221Q624 231 622 242M568 365Q557 368 548 362M91 420Q88 411 83 403M24 521Q23 519 21 516M256 216Q253 206 251 196M153 193Q152 190 150 188M502 475Q501 481 501 486M505 498Q499 501 493 500M241 80Q250 79 258 81M529 337Q525 346 520 354M53 -6Q57 -8 59 -11M586 383Q593 391 601 398M252 507Q245 514 237 521M388 355Q380 350 370 349M603 60Q605 64 609 65M62 175Q63 172 66 170M110 310Q109 300 113 291M291 275Q300 280 311 284M252 304Q248 303 244 302M131 240Q128 234 128 226M291 279Q293 273 295 268M592 45Q599 48 606 46M126 234Q131 231 134 226M473 260Q464 257 454 257M292 117Q298 115 304 119M441 463Q438 462 435 463M607 4Q609 8 607 12M596 142Q603 149 610 157M145 -9Q150 -10 155 -9M80 518Q71 514 62 509M354 -6Q360 -7 365 -5M526 450Q515 454 504 451M366 204Q368 199 372 193M371 182Q378 178 385 175M361 464Q359 461 355 459M165 524Q161 516 160 507M18 214Q18 206 20 198M510 177Q504 180 498 177M245 531Q242 532 240 531M525 288Q533 291 541 293M355 391Q352 388 347 387M608 196Q611 204 618 207M437 328Q436 326 435 324M552 24Q557 18 564 15M209 343Q199 342 191 339M532 148Q536 157 534 168M267 534Q258 530 248 528M404 457Q400 455 395 453M209 458Q212 450 214 442M481 -19Q485 -21 490 -24M110 400Q114 397 118 396M113 319Q110 312 103 306M157 98Q165 91 173 84M13 233Q6 240 -2 245M326 328Q325 324 323 319M121 186Q120 190 118 191M620 107Q621 114 622 120M490 479Q488 482 485 484M413 336Q408 328 404 320M5 209Q3 202 0 195M467 87Q470 94 474 101M147 12Q145 8 147 3M410 113Q406 108 400 104M301 20Q305 13 309 7M452 211Q448 220 450 230M45 398Q44 393 43 389M-15 -9Q-13 -18 -8 -26M254 498Q247 489 248 479M191 389Q192 384 191 379M211 -14Q216 -18 223 -19M466 262Q456 263 447 262M326 32Q325 28 325 24M364 170Q368 161 369 152M483 135Q486 145 493 152M403 465Q397 473 393 482M341 413Q339 406 336 399M254 206Q257 202 258 198M248 86Q243 79 243 70M-13 24Q-14 17 -20 13M135 483Q131 478 131 471M522 339Q520 341 519 343M162 293Q157 287 152 282M175 17Q173 9 168 3M138 248Q129 249 123 244M114 27Q123 24 133 24M108 107Q105 99 98 95M392 103Q402 103 410 98M258 13Q259 9 261 5M537 365Q538 372 537 379M407 31Q411 34 415 34M622 23Q626 25 629 29M576 213Q581 217 585 220M3 38Q6 33 6 26M-3 140Q-3 135 0 131M266 357Q264 353 262 348M308 76Q312 81 319 83M428 126Q429 129 429 132M558 299Q553 301 548 300M359 -11Q363 -12 367 -12M71 363Q78 361 83 356M100 522Q107 520 110 513M381 308Q374 305 370 300M517 425Q517 433 517 441M161 356Q165 349 172 343M535 413Q532 424 532 434M-13 62Q-17 58 -19 53M26 377Q22 369 15 364M418 240Q417 233 413 228M616 378Q616 382 618 386M415 366Q412 363 410 359M185 237Q189 230 194 223M191 169Q193 166 196 166M152 450Q144 455 134 456M352 416Q345 409 341 401M90 11Q93 8 95 5M181 408Q183 406 182 403M101 255Q99 248 98 242M153 535Q148 539 144 544M447 401Q442 409 436 415M475 523Q467 525 460 530M118 215Q108 211 98 208M36 488Q32 478 34 468M335 435Q335 425 338 416M-6 270Q-3 267 -2 262M171 495Q165 503 155 504M385 137Q394 134 404 136M429 -10Q431 -9 434 -9M-9 347Q-14 343 -21 343M17 336Q18 328 18 320M477 119Q486 117 496 119M553 371Q550 377 552 383M29 140Q32 131 39 125M112 499Q111 496 110 493M392 305Q389 303 388 300M153 526Q146 531 144 539M34 209Q33 206 32 203M49 476Q42 472 38 465M40 444Q40 435 38 426M93 459Q94 454 94 448M573 172Q571 178 567 183M295 393Q292 392 288 390M443 405Q436 402 430 397M559 95Q554 102 552 110M209 27Q213 25 217 24M469 103Q477 100 486 100M528 218Q524 217 519 216M398 186Q402 185 406 182M56 147Q57 137 57 127M32 265Q37 256 42 248M523 303Q515 305 506 302M597 148Q602 155 600 163M316 293Q315 288 312 284M397 370Q394 368 393 363M10 298Q4 298 -2 298M338 236Q336 238 332 238M472 257Q461 255 450 260M476 373Q476 382 470 388M423 509Q418 503 413 497M10 385Q1 387 -8 384M220 475Q220 471 219 467M67 324Q77 323 87 319M34 31Q43 28 49 20M322 232Q322 227 319 223M76 498Q78 492 76 486M292 179Q299 175 304 168M63 506Q59 502 54 499M471 14Q477 22 485 26M102 136Q105 139 108 141M-8 358Q-2 354 3 352M246 132Q242 124 245 115M279 38Q281 36 285 37M372 425Q366 430 364 437M39 448Q47 446 56 447M529 535Q523 537 520 542M100 -17Q104 -21 110 -23M189 513Q182 514 174 513M143 400Q142 396 144 392M506 152Q512 156 518 159M617 528Q612 524 606 524M303 163Q305 153 309 144M537 73Q539 76 540 79M180 399Q184 395 190 393M464 186Q470 191 478 195M5 248Q8 242 10 235M316 88Q317 77 325 71M519 273Q520 281 517 289M610 406Q600 405 591 409M102 123Q99 118 94 117M233 420Q229 416 227 410M340 121Q345 114 342 106M212 516Q213 513 211 509M342 58Q344 53 347 48M467 -7Q470 -2 476 -1M500 131Q506 134 510 140M131 266Q128 258 126 251M610 143Q614 152 618 162M255 275Q255 266 256 256M265 305Q265 300 261 297M142 162Q144 152 145 142M77 374Q78 371 81 370M186 275Q190 273 193 271M604 368Q601 374 600 381M92 55Q92 48 97 43M446 361Q438 365 430 367M457 255Q460 262 464 269M17 212Q15 209 13 206M568 408Q571 403 575 397M316 80Q327 84 335 90M586 181Q589 189 587 198M139 326Q133 330 125 328M385 524Q381 517 374 515M199 233Q196 229 196 224M203 73Q199 73 195 72M56 128Q58 121 64 118M118 149Q121 151 124 151M600 259Q604 264 604 270M378 144Q387 146 396 146M476 469Q470 468 467 464M205 54Q204 49 205 44M286 57Q284 47 289 39M552 449Q548 447 545 445M34 47Q35 44 34 40M583 103Q582 112 577 119M383 120Q391 113 397 105M315 72Q320 69 321 63M298 421Q290 417 283 413M376 204Q377 198 376 193M362 335Q360 330 358 324M365 401Q354 397 344 400M558 304Q557 312 555 321M355 506Q346 508 338 504M-14 522Q-20 524 -26 521M1 265Q-7 259 -17 259M15 483Q10 478 5 474M388 398Q383 400 378 403M-17 469Q-23 466 -25 459M291 379Q289 376 286 374M320 -10Q316 -15 315 -21M38 90Q41 80 43 71M478 45Q487 49 495 56M348 452Q347 449 346 445M523 309Q518 311 516 316M413 355Q416 348 419 342M489 219Q486 219 483 218M290 371Q283 371 277 372M46 86Q48 76 53 67M322 530Q318 532 315 537M494 404Q489 407 485 411M95 495Q90 490 84 485M187 41Q181 41 177 38M45 393Q38 388 31 382M433 436Q430 438 427 441M252 530Q245 526 240 519M216 379Q209 372 204 363M189 62Q192 61 193 58M581 397Q579 404 575 411M186 132Q182 124 180 114M333 155Q342 152 350 146M92 201Q92 197 89 194M419 301Q418 295 414 291M35 94Q44 96 52 99M295 79Q290 71 288 62M537 140Q542 142 545 146M280 508Q277 504 272 504M9 -19Q14 -16 20 -18M146 15Q154 8 161 0M346 218Q356 214 364 208M561 82Q570 88 574 97M76 196Q66 195 58 189M621 453Q618 454 617 457M548 34Q553 39 556 45M582 381Q583 390 583 399M541 30Q548 28 551 22M143 224Q151 218 155 208M430 475Q427 480 421 483M484 210Q489 216 489 223M22 142Q13 139 6 132M129 453Q129 450 128 447M449 14Q454 10 456 4M287 410Q276 408 266 408M347 428Q351 423 350 417M114 226Q112 222 109 219M17 469Q20 464 24 461M564 324Q560 325 556 327M376 37Q380 37 385 35M172 143Q170 136 173 130M46 186Q43 176 40 167M243 270Q241 266 242 261M392 245Q392 241 390 238M379 438Q387 430 393 422M437 45Q448 43 454 34M494 66Q501 61 507 55M291 426Q285 432 278 433M355 341Q354 336 352 331M570 526Q567 521 565 516M481 3Q485 -4 494 -7M65 157Q63 151 59 146M571 216Q561 220 553 228M61 228Q63 225 64 222M478 59Q480 68 477 76M50 124Q50 120 48 116M586 268Q589 271 593 270M243 113Q250 106 250 95M596 168Q598 177 597 186M419 69Q422 74 426 78M384 474Q381 470 380 464M110 387Q113 383 113 378M114 167Q112 160 114 152M477 520Q474 522 471 523M503 431Q494 438 482 438M106 58Q100 57 95 60M110 479Q101 478 93 476M489 396Q491 400 493 404M291 402Q289 399 289 397M437 315Q438 312 441 309M288 452Q285 448 281 445M159 439Q159 433 159 428M99 433Q98 427 99 420M539 146Q540 148 542 150M94 254Q92 251 90 249M171 515Q168 515 165 515M589 55Q584 63 575 65M539 396Q531 399 523 401M392 411Q389 401 388 392M573 453Q566 447 558 445M-15 10Q-14 3 -11 -2M362 264Q362 259 365 256M312 -6Q316 0 322 3M260 64Q260 61 261 58M281 437Q274 431 270 423M49 383Q47 378 42 374M45 258Q42 252 42 246M334 505Q330 503 325 504M495 499Q488 501 481 503M157 359Q159 355 158 352M578 152Q576 162 577 173M186 149Q193 144 195 136M327 178Q336 175 344 174M156 139Q161 134 167 131M550 441Q547 450 551 459M508 437Q508 441 506 446M135 110Q131 105 131 99M159 514Q157 516 156 518M501 140Q505 149 503 159M76 47Q80 46 83 44M88 291Q85 290 83 289M76 351Q83 351 88 347M290 501Q291 508 289 514M76 297Q80 288 89 283M206 40Q214 35 219 27M522 494Q522 502 526 509M511 355Q503 350 493 350M80 136Q83 137 86 138M409 282Q406 280 402 279M241 488Q232 484 223 482M599 89Q602 86 605 84M261 336Q257 327 252 317M589 86Q596 94 606 94M372 316Q362 317 352 318M537 242Q538 248 539 254M423 311Q413 316 403 313M242 50Q245 47 247 44M218 215Q221 212 225 210M627 365Q621 373 617 382M501 -19Q502 -15 502 -11M201 366Q207 360 208 352M116 57Q112 47 105 41M260 9Q263 6 265 2M491 44Q492 49 492 54M171 152Q177 150 180 143M130 394Q127 394 124 394M301 229Q302 225 302 220M289 513Q284 515 279 517M64 7Q68 3 72 -2M505 73Q514 71 524 72M69 419Q66 417 64 415M222 169Q224 163 229 159M201 103Q193 97 191 88M-10 351Q-18 344 -23 335M441 513Q434 509 426 511M468 89Q470 95 472 100M368 365Q360 371 350 371M189 280Q189 276 187 273M628 82Q622 87 616 93M370 153Q377 151 383 147M437 11Q444 11 450 13M271 158Q268 151 267 142M357 453Q354 450 352 447M93 123Q97 122 100 119M121 136Q125 131 128 124M273 95Q277 92 281 89M221 137Q224 137 227 137M148 420Q149 412 143 405M434 329Q430 325 426 323M-13 441Q-22 448 -33 449M11 127Q14 125 16 122M45 65Q43 61 45 58M278 124Q283 125 288 123M206 102Q207 98 208 94M519 208Q517 212 513 214M331 271Q338 263 340 252M127 167Q127 164 124 161M425 467Q416 461 410 452M253 22Q256 21 257 18M34 289Q31 279 24 273M196 362Q194 361 192 358M526 53Q534 61 543 64M139 409Q139 405 136 401M391 377Q383 372 377 366M419 425Q411 425 403 429M258 453Q258 450 257 448M342 272Q345 266 343 260M141 237Q133 230 126 223M487 39Q488 43 490 46M239 203Q236 195 240 187M462 399Q465 409 473 416M287 21Q296 27 307 25M455 273Q452 271 450 271M132 534Q124 529 122 520M26 193Q31 190 34 185M361 142Q370 135 373 125M227 419Q228 416 226 414M491 -5Q495 0 501 4M384 346Q383 337 385 329M272 408Q270 408 268 409M625 384Q625 389 623 393M224 476Q220 478 215 479M331 481Q329 482 326 481M492 139Q501 144 510 151M270 526Q274 521 274 514M561 339Q553 341 546 347M431 331Q428 323 427 315M416 87Q418 76 419 65M128 274Q123 271 120 265M530 1Q541 4 551 -1M504 453Q504 461 497 467M328 65Q331 61 333 56M555 446Q546 447 538 441M526 41Q528 45 531 48M510 529Q502 523 495 518M295 488Q289 487 283 490M243 7Q254 8 264 4M48 165Q47 160 44 155M573 109Q577 120 585 127M423 126Q430 128 436 127M419 79Q428 79 437 78M431 364Q427 368 421 369M261 475Q259 477 259 480M154 423Q149 426 144 424M130 107Q132 104 132 100M76 109Q82 102 82 92M584 239Q575 236 567 230M264 191Q267 185 267 177M237 303Q239 294 239 285M322 190Q318 185 317 179M406 106Q412 111 416 117M225 77Q227 67 222 59M-3 35Q-9 29 -13 24M12 195Q7 190 7 183M515 144Q522 142 530 140M400 52Q402 49 404 46M582 347Q573 354 564 360M196 474Q188 474 180 473M361 160Q366 157 367 151M44 506Q43 504 42 502M333 181Q335 174 332 167M585 -4Q588 -6 591 -6M105 457Q105 449 103 442M295 333Q295 328 298 326M111 255Q114 246 116 238M475 520Q471 525 466 528M-17 104Q-20 102 -21 100M223 272Q220 267 221 262M234 169Q239 169 244 167M70 291Q74 285 74 278M204 166Q206 161 205 157M484 454Q481 459 475 460M0 370Q-2 367 -1 363M277 444Q275 442 274 439M578 518Q574 517 570 518M480 180Q480 183 481 185M99 421Q92 414 83 412M581 501Q580 506 582 510M124 104Q124 100 124 97M255 18Q252 11 251 3M286 -3Q290 -4 294 -3M612 328Q613 331 612 333M280 129Q286 128 289 123M213 486Q209 480 206 473M300 89Q311 91 321 87M540 393Q530 391 520 393M11 300Q15 296 16 291M483 75Q485 69 491 64M347 210Q340 205 332 204M425 39Q430 46 434 54M215 260Q214 257 213 255M545 -13Q553 -8 560 -2M0 -18Q9 -19 18 -21M88 355Q96 352 105 348M568 278Q563 280 559 279M133 519Q123 516 112 516M121 114Q119 107 120 100M94 329Q93 324 90 320M285 280Q287 271 294 265M399 437Q398 445 401 453M76 423Q73 418 73 412M537 85Q541 83 547 84M135 201Q131 191 123 184M611 171Q613 176 612 182M140 419Q133 424 126 425M20 458Q19 455 18 452M192 192Q193 189 193 186M585 129Q587 137 590 144M243 -3Q248 -13 252 -23M-11 266Q-13 262 -14 257M60 6Q54 -1 55 -10M479 475Q480 468 482 461M629 449Q632 455 632 462M570 334Q565 337 562 343M149 494Q151 487 149 480M135 2Q142 -3 149 -9M504 386Q504 391 502 396M377 178Q380 177 381 174M182 460Q180 450 181 440M-5 490Q-4 482 -3 474M0 179Q5 178 11 177M281 409Q278 405 278 400M568 469Q559 468 550 463M96 46Q96 38 96 30M73 432Q69 432 66 430M227 -15Q231 -23 231 -31M60 319Q59 313 61 308M580 228Q575 235 566 237M63 370Q60 368 58 365M218 499Q213 498 209 495M215 115Q226 115 235 109M1 457Q-1 451 0 445M125 518Q122 517 120 514M385 300Q383 304 379 306M198 477Q188 475 183 467M59 273Q62 267 62 259M1 80Q-3 76 -9 74M343 333Q344 327 349 323M481 2Q484 10 487 19M441 457Q437 459 432 460M4 35Q10 40 16 44M264 39Q269 37 271 32M350 463Q347 468 342 470M461 518Q457 511 451 505M541 127Q547 127 552 128M20 204Q17 201 14 200M72 223Q78 222 82 219M324 389Q319 389 314 387M191 529Q190 532 187 534M467 149Q460 157 450 158M181 169Q176 164 174 158M465 56Q470 59 473 64M149 415Q148 410 148 406M332 79Q334 71 339 65M254 211Q257 205 262 202M542 439Q538 444 536 451M564 444Q562 442 559 441M348 470Q344 475 342 480M181 268Q189 265 196 259M614 -9Q623 -10 632 -7M206 407Q211 400 209 391M158 203Q162 205 167 205M316 -19Q317 -24 315 -28M42 18Q43 14 43 11M248 301Q251 293 256 287M-3 120Q-6 110 -12 102M458 14Q465 17 473 14M11 325Q3 319 -1 310M193 443Q187 436 179 428M594 0Q599 2 603 5M217 390Q215 381 215 372M148 66Q139 63 135 54M536 352Q531 356 524 357M515 179Q526 179 535 186M350 203Q344 199 340 195M184 81Q185 75 185 69M343 384Q338 380 335 375M145 114Q143 105 142 96M559 252Q561 257 565 260M411 382Q403 385 396 389M167 303Q175 297 183 292M170 184Q167 180 167 175M-14 47Q-7 43 -3 36M583 207Q589 213 597 216M364 433Q358 426 350 420M317 137Q327 138 336 132M149 449Q143 443 137 437M400 -1Q403 -7 406 -13M459 494Q450 490 441 487M57 469Q59 458 57 448M515 164Q522 163 528 165M520 282Q516 288 516 295M322 298Q311 298 301 293M302 35Q305 35 309 34M508 474Q504 477 500 478M342 423Q338 426 334 425M330 298Q336 293 337 285M384 30Q391 24 397 17M193 269Q194 260 191 251M51 25Q54 19 61 14M49 363Q49 355 48 347M37 390Q31 384 24 378M187 468Q188 458 185 448M455 420Q447 413 438 408M72 67Q74 60 80 55M48 -11Q45 -17 41 -22M264 229Q263 222 264 216M316 67Q320 68 324 68M481 307Q477 308 475 311M8 157Q12 158 16 160M57 414Q48 408 37 406M553 90Q564 88 572 95M617 70Q620 69 623 71M499 489Q492 489 488 494M-16 479Q-18 476 -20 472M579 415Q577 420 576 424M328 217Q322 219 315 220M135 186Q138 179 142 171M238 333Q232 334 227 333M492 453Q490 461 494 468M553 333Q550 334 548 335M538 519Q537 524 533 528M627 400Q620 409 622 420M562 287Q556 295 550 302M259 516Q254 508 247 502M538 430Q530 435 524 441M525 -2Q530 6 532 17M353 245Q350 239 348 233M6 217Q13 211 15 202M485 75Q487 84 484 93M205 449Q207 441 206 433M21 9Q22 0 15 -8M156 -12Q156 -17 159 -22M179 233Q175 233 172 230M222 478Q216 475 210 473M-14 147Q-18 149 -22 151M563 55Q566 63 568 71M101 475Q98 471 94 467M270 403Q262 411 259 422M273 384Q266 387 258 387M72 457Q66 452 58 452M306 173Q305 167 309 163M584 126Q590 126 596 128M164 433Q162 427 163 421M564 355Q563 358 561 361M61 459Q55 457 49 458M294 483Q290 476 282 474M200 467Q194 474 185 477M197 28Q199 19 199 9M290 525Q295 521 298 515M185 314Q177 315 169 311M436 301Q424 301 416 309M507 515Q496 517 486 513M578 386Q576 387 573 389M612 56Q614 63 612 70M116 231Q113 225 107 221M113 1Q119 -2 125 -5M285 111Q284 104 282 97M506 44Q513 51 519 60M267 205Q271 199 277 197M543 235Q546 234 547 231M256 375Q256 370 252 366M297 503Q294 510 290 517M346 452Q345 455 345 458M400 340Q394 338 391 332M410 459Q406 456 405 452M383 124Q390 126 398 128M300 427Q290 423 286 413M80 195Q77 188 79 182M428 124Q435 124 440 119M14 478Q12 471 13 465M399 128Q405 126 412 127M592 438Q588 445 581 448M164 450Q162 442 159 434"/><path stroke="#888" stroke-width="1.1" d="M195 469Q191 463 184 462M134 147Q135 140 136 133M483 206Q493 209 500 218M591 534Q592 538 593 543M523 139Q528 140 531 144M536 193Q541 191 547 193M621 172Q628 175 632 180M89 183Q90 180 91 176M113 376Q110 374 110 371M81 171Q83 161 81 152M492 333Q487 328 480 325M598 453Q590 459 588 469M236 231Q226 231 215 232M155 381Q152 375 147 371M252 264Q250 258 250 253M99 3Q102 -4 105 -12M256 19Q255 13 251 10M138 340Q134 331 134 321M38 21Q43 18 50 16M335 508Q332 507 329 506M322 212Q320 201 323 191M346 90Q344 86 342 84M119 279Q116 272 108 270M150 479Q156 478 159 473M392 115Q395 114 399 115M283 323Q283 326 284 329M222 151Q226 148 230 145M371 284Q360 284 351 279M476 117Q480 117 483 117M365 521Q362 520 358 522M415 109Q411 105 408 99M231 428Q230 421 230 413M39 238Q38 231 39 224M253 353Q253 350 252 346M226 452Q228 449 230 445M573 192Q564 195 555 194M615 343Q613 348 613 353M520 471Q514 472 510 477M494 288Q484 287 475 291M78 315Q76 309 79 303M142 213Q143 210 144 207M608 435Q618 435 628 433M297 358Q290 359 284 355M595 528Q601 530 606 530M326 94Q332 83 343 80M132 -7Q137 -4 142 -1M373 132Q380 128 385 122M359 145Q362 141 367 138M159 345Q155 336 159 326M560 429Q552 423 547 413M630 373Q628 372 626 371M38 82Q42 84 46 85M380 18Q389 18 397 19M514 310Q520 320 531 323M311 278Q309 274 304 273M-14 372Q-12 365 -12 358M151 370Q144 369 137 369M454 353Q449 354 443 357M13 444Q14 440 14 436M439 519Q441 523 444 528M609 524Q605 516 601 508M30 151Q39 146 47 138M73 83Q76 83 79 82M619 309Q616 319 617 330M127 356Q128 347 123 340M3 61Q-3 61 -9 57M-19 -5Q-10 -2 -1 -3M213 167Q212 164 209 162M570 158Q566 162 561 162M389 381Q383 375 380 368M346 336Q343 333 341 329M324 406Q324 400 322 395M589 356Q579 355 569 351M362 -15Q367 -6 377 -2M18 248Q23 245 27 241M400 332Q397 336 394 340M252 214Q261 213 267 208M31 318Q35 314 38 308M461 243Q458 246 455 246M199 478Q194 471 185 469M111 101Q114 107 112 113M479 215Q484 218 489 221M405 -16Q415 -15 424 -10M156 103Q160 93 156 84M32 167Q28 160 24 152M100 511Q102 505 105 500M203 535Q201 525 205 515M448 291Q443 287 439 284M374 448Q369 450 363 450M40 213Q34 204 35 192M290 423Q285 422 281 420M434 279Q429 285 425 290M582 246Q589 249 592 256M462 116Q464 115 467 117M149 206Q147 202 149 199M274 76Q278 70 286 68M289 83Q292 77 291 71M241 404Q233 401 228 394M23 164Q26 160 30 156M500 233Q504 243 514 248M509 476Q502 478 497 482M313 433Q310 439 304 443M617 45Q619 50 622 56M501 214Q495 220 492 228M536 506Q530 505 525 503M556 198Q554 207 551 216M223 45Q221 36 226 28M311 408Q308 406 305 405M144 524Q141 515 137 505M565 366Q559 367 555 372M504 421Q500 418 495 417M190 16Q194 7 199 0M444 363Q435 366 426 370M81 111Q90 105 94 96M276 315Q272 316 268 315M85 171Q77 172 68 172M390 530Q380 527 369 525M589 408Q585 411 580 412M451 128Q455 133 455 139M18 412Q17 407 15 403M579 468Q572 472 564 469M492 295Q489 292 485 293M304 115Q309 114 311 110M353 194Q349 187 345 181M260 369Q256 369 252 369M234 399Q227 401 221 403M118 170Q127 165 132 155M69 59Q63 55 56 52M468 190Q470 201 479 208M99 340Q105 335 112 331M523 -17Q527 -18 530 -15M340 527Q336 529 333 532M388 115Q393 118 398 121M278 263Q270 259 265 251M472 234Q475 241 479 247M90 133Q96 126 104 119M211 499Q213 495 214 492M577 467Q578 470 576 472M21 19Q25 17 29 18M81 31Q87 30 91 33M399 304Q393 310 392 318M288 350Q282 346 278 340M619 335Q611 341 609 350M4 56Q12 53 20 49"/></g></svg></div>

<!-- table -->
<div class="a" style="left:351px;top:39px;width:486px;height:138px;background:#fff;border-top:1px solid #f4f2e8;border-left:1px solid #f4f2e8"></div>
<div class="a" style="left:352px;top:40px;width:485px;height:26px;background:linear-gradient(#efede0,#ebe8d8 75%,#dcd8c8);border-bottom:1px solid #cbc7b6"></div>
<div class="cs" style="left:388px"></div><div class="cs" style="left:458px"></div><div class="cs" style="left:515px"></div><div class="cs" style="left:603px"></div><div class="cs" style="left:664px"></div><div class="cs" style="left:704px"></div><div class="cs" style="left:760px"></div>
<div class="sw" style="top:67px;height:16px;background:#242424"></div>
<div class="sw" style="top:83px;height:16px;background:#171717"></div>
<div class="sw" style="top:99px;height:15px;background:#474747"></div>
<div class="sw" style="top:114px;height:16px;background:#5b5b5b"></div>
<div class="sw" style="top:130px;height:16px;background:#0b0b0b"></div>
<div class="sw" style="top:146px;height:15px;background:#6b6b6b"></div>
<div class="sw" style="top:161px;height:16px;background:#7a7a7a"></div>

<!-- info box -->
<div class="a" style="left:500px;top:399px;width:338px;height:122px;background:#ece9d8;border-top:2px solid #f4f6f2;border-left:2px solid #f8f6ee"></div>

<!-- scrollbars -->
<div class="a" style="left:840px;top:33px;width:12px;height:516px;background:#eceae0;border-right:1px solid #5a574e"></div>
<div class="sb" style="left:840px;top:33px;width:11px;height:11px"><div class="a" style="left:2px;top:2px;border:3px solid transparent;border-top:0;border-bottom:4px solid #000"></div></div>
<div class="a" style="left:840px;top:53px;width:11px;height:475px;background:#b3afa4;border-left:1px solid #c8c5ba"><div class="a" style="left:2px;top:235px;width:7px;height:5px;border-top:1px solid #d8d5ca;border-bottom:1px solid #d8d5ca"></div></div>
<div class="sb" style="left:840px;top:538px;width:11px;height:11px"><div class="a" style="left:2px;top:2px;border:3px solid transparent;border-bottom:0;border-top:4px solid #000"></div></div>

<div class="a" style="left:229px;top:549px;width:611px;height:12px;background:#eceae0;border-bottom:1px solid #8a877c"></div>
<div class="sb" style="left:229px;top:549px;width:12px;height:12px"><div class="a" style="left:2px;top:2px;border:3px solid transparent;border-left:0;border-right:4px solid #000"></div></div>
<div class="a" style="left:283px;top:549px;width:498px;height:12px;background:#b3afa4;border-top:1px solid #c8c5ba"><div class="a" style="left:245px;top:2px;width:5px;height:7px;border-left:1px solid #d8d5ca;border-right:1px solid #d8d5ca"></div></div>
<div class="sb" style="left:828px;top:549px;width:12px;height:12px"><div class="a" style="left:3px;top:2px;border:3px solid transparent;border-right:0;border-left:4px solid #000"></div></div>
<div class="a" style="left:852px;top:21px;width:2px;height:540px;background:#f8f5ea"></div>

<!-- RIGHT PANEL -->
<div class="btn" style="left:860px;top:27px;width:70px;height:15px"></div>
<div class="btn" style="left:860px;top:50px;width:70px;height:16px"></div>
<div class="inp" style="left:858px;top:84px;width:70px;height:14px">
  <div class="a" style="right:0;top:0;width:12px;height:12px;background:#e8ecf4;border-left:1px solid #d0d8e4"><svg class="a" style="left:2px;top:4px" width="8" height="5" viewBox="0 0 8 5"><path d="M1 0.5l3 3 3-3" fill="none" stroke="#445" stroke-width="1.4"/></svg></div>
</div>
<div class="chk" style="left:859px;top:104px"></div>
<div class="chk" style="left:859px;top:115px"></div>

<div class="grp" style="left:859px;top:130px;width:70px;height:57px"></div><div class="lg" style="left:864px;top:126px;width:66px"></div>
<div class="inp" style="left:865px;top:146px;width:58px;height:15px"></div>
<div class="btn" style="left:866px;top:167px;width:56px;height:15px"></div>

<div class="grp" style="left:859px;top:195px;width:70px;height:61px"></div><div class="lg" style="left:864px;top:192px;width:60px"></div>
<div class="inp" style="left:865px;top:214px;width:58px;height:15px"></div>
<div class="btn" style="left:866px;top:235px;width:56px;height:15px"></div>

<div class="grp" style="left:859px;top:263px;width:70px;height:89px"></div><div class="lg" style="left:864px;top:259px;width:33px"></div>
<div class="inp" style="left:865px;top:281px;width:56px;height:15px"><div class="spb"></div></div>
<div class="inp" style="left:865px;top:309px;width:56px;height:15px"><div class="spb"></div></div>
<div class="btn" style="left:867px;top:330px;width:33px;height:15px"></div>
<div class="btn" style="left:907px;top:330px;width:15px;height:15px"></div>

<div class="grp" style="left:859px;top:360px;width:70px;height:53px"></div><div class="lg" style="left:864px;top:356px;width:39px"></div>
<div class="inp" style="left:865px;top:370px;width:58px;height:15px"><div class="spb"></div></div>
<div class="btn" style="left:866px;top:392px;width:35px;height:15px"></div>
<div class="btn" style="left:907px;top:392px;width:15px;height:15px"></div>

<div class="grp" style="left:859px;top:422px;width:70px;height:59px"></div><div class="lg" style="left:864px;top:418px;width:56px"></div>
<div class="inp" style="left:865px;top:439px;width:58px;height:15px"></div>
<div class="btn" style="left:867px;top:460px;width:55px;height:14px"></div>

<div class="t" style="left:16px;top:4.4px;font-size:9.5px;transform:scaleX(0.912);color:#1c3c78;font-weight:bold;opacity:.75;text-shadow:none">melanze0</div>
<div class="t" style="left:99.1px;top:20.5px;font-size:9px;transform:scaleX(0.914)">дельта</div>
<div class="t" style="left:111.3px;top:31.6px;font-size:9px;transform:scaleX(0.821)">HSV</div>
<div class="t" style="left:111.3px;top:42.8px;font-size:9px;transform:scaleX(0.799);color:#555">RGB</div>
<div class="t" style="left:100px;top:55.7px;font-size:9px;transform:scaleX(0.847)">H(R)</div>
<div class="t" style="left:121.6px;top:55.7px;font-size:9px;transform:scaleX(0.829)">10</div>
<div class="t" style="left:100.8px;top:73.7px;font-size:9px;transform:scaleX(0.805)">S(G)</div>
<div class="t" style="left:121.6px;top:73.7px;font-size:9px;transform:scaleX(0.829)">10</div>
<div class="t" style="left:100.3px;top:91.2px;font-size:9px;transform:scaleX(0.828)">V(B)</div>
<div class="t" style="left:121.6px;top:91.2px;font-size:9px;transform:scaleX(0.829)">10</div>
<div class="t" style="left:165.1px;top:27px;font-size:9px;transform:scaleX(0.914)">Подсветить</div>
<div class="t" style="left:176px;top:50.5px;font-size:9px;transform:scaleX(0.852)">Сброс</div>
<div class="t" style="left:170.1px;top:72.8px;font-size:9px;transform:scaleX(0.850)">Совпадение</div>
<div class="t" style="left:6.2px;top:111.8px;font-size:10.5px;transform:scaleX(0.941)">HSV модель:</div>
<div class="t" style="left:196.8px;top:124px;font-size:9px;transform:scaleX(0.831)">H</div>
<div class="t" style="left:207.4px;top:124.3px;font-size:9px;transform:scaleX(0.818)">212</div>
<div class="t" style="left:197.2px;top:153.5px;font-size:9px;transform:scaleX(0.780)">S</div>
<div class="t" style="left:209.5px;top:153.5px;font-size:9px;transform:scaleX(0.799)">20</div>
<div class="t" style="left:196.8px;top:183px;font-size:9px;transform:scaleX(0.898)">V</div>
<div class="t" style="left:207.4px;top:183.3px;font-size:9px;transform:scaleX(0.818)">163</div>
<div class="t" style="left:6.2px;top:210.6px;font-size:10.5px;transform:scaleX(0.945)">RGB модель</div>
<div class="t" style="left:196.8px;top:223.5px;font-size:9px;transform:scaleX(0.831)">R</div>
<div class="t" style="left:207.4px;top:223.8px;font-size:9px;transform:scaleX(0.818)">150</div>
<div class="t" style="left:196.8px;top:253px;font-size:9px;transform:scaleX(0.798)">G</div>
<div class="t" style="left:207.4px;top:253.3px;font-size:9px;transform:scaleX(0.818)">156</div>
<div class="t" style="left:196.8px;top:282px;font-size:9px;transform:scaleX(0.898)">B</div>
<div class="t" style="left:207.4px;top:282.3px;font-size:9px;transform:scaleX(0.818)">163</div>
<div class="t" style="left:6.9px;top:319.3px;font-size:8.5px;transform:scaleX(0.908);color:#2c2c2c;text-shadow:none">средние значения:</div>
<div class="t" style="left:6.9px;top:328.2px;font-size:8.5px;transform:scaleX(0.908);color:#2c2c2c;text-shadow:none">R: 29, G: 29, B: 29,</div>
<div class="t" style="left:6.9px;top:337.4px;font-size:8.5px;transform:scaleX(0.926);color:#2c2c2c;text-shadow:none">средняя неровнота кода цвета:</div>
<div class="t" style="left:6.9px;top:346.6px;font-size:8.5px;transform:scaleX(0.914);color:#2c2c2c;text-shadow:none">Cv: 29,00;</div>
<div class="t" style="left:6.9px;top:356px;font-size:8.5px;transform:scaleX(0.939);color:#2c2c2c;text-shadow:none">среднее квадратическое отклонение:</div>
<div class="t" style="left:6.9px;top:365.3px;font-size:8.5px;transform:scaleX(0.914);color:#2c2c2c;text-shadow:none">R: 12,40, G: 12,40, B: 12,40,</div>
<div class="t" style="left:6.9px;top:374.8px;font-size:8.5px;transform:scaleX(0.905);color:#2c2c2c;text-shadow:none">коэффициент вариации:</div>
<div class="t" style="left:6.9px;top:384px;font-size:8.5px;transform:scaleX(0.883);color:#2c2c2c;text-shadow:none">R: 42,80%; G: 42,80%; B: 42,80%;</div>
<div class="t" style="left:175.9px;top:321.2px;font-size:9px;transform:scaleX(0.884)">Статистика</div>
<div class="t" style="left:172.2px;top:342.9px;font-size:9px;transform:scaleX(0.918)">Гистограмма</div>
<div class="t" style="left:176.6px;top:357px;font-size:9px;transform:scaleX(0.780)">Сорт.</div>
<div class="t" style="left:187.5px;top:370px;font-size:9px;transform:scaleX(0.844)">TColor</div>
<div class="t" style="left:187.5px;top:382.2px;font-size:9px;transform:scaleX(0.790);color:#444">H(HSV)</div>
<div class="t" style="left:229px;top:19.8px;font-size:8.5px;transform:scaleX(0.944);color:#222;text-shadow:none">размер изображения: 1639x1223 (0,00x0,00) ; использовано цветов: 166</div>
<div class="t" style="left:366.7px;top:49.7px;font-size:12px;transform:scaleX(1.188);color:#222">№</div>
<div class="t" style="left:397.3px;top:49.7px;font-size:12px;transform:scaleX(1.018);color:#222">S кл. (px)</div>
<div class="t" style="left:469.6px;top:49.7px;font-size:12px;transform:scaleX(0.997);color:#222">(мм^2)</div>
<div class="t" style="left:524.4px;top:49.7px;font-size:12px;transform:scaleX(1.020);color:#222">Цвет (R/G/B)</div>
<div class="t" style="left:614.5px;top:49.7px;font-size:12px;transform:scaleX(1.034);color:#222">Цвет</div>
<div class="t" style="left:675.6px;top:49.7px;font-size:12px;transform:scaleX(0.899);color:#222">H</div>
<div class="t" style="left:714.6px;top:49.7px;font-size:12px;transform:scaleX(1.012);color:#222">Пятен</div>
<div class="t" style="left:770.8px;top:49.7px;font-size:12px;transform:scaleX(0.995);color:#222">Ср. S пятен</div>
<div class="t" style="left:363.2px;top:69.2px;font-size:12px;transform:scaleX(0.875);color:#111">1</div>
<div class="t" style="left:393.7px;top:69.2px;font-size:12px;transform:scaleX(0.956);color:#111">715857</div>
<div class="t" style="left:521.8px;top:69.2px;font-size:12px;transform:scaleX(1.017);color:#111">36/36/36</div>
<div class="t" style="left:672.9px;top:69.2px;font-size:12px;transform:scaleX(0.876);color:#111">NAN</div>
<div class="t" style="left:711.8px;top:69.2px;font-size:12px;transform:scaleX(0.984);color:#111">1186</div>
<div class="t" style="left:768px;top:69.2px;font-size:12px;transform:scaleX(0.966);color:#111">603,59</div>
<div class="t" style="left:363.2px;top:84.8px;font-size:12px;transform:scaleX(0.875);color:#111">2</div>
<div class="t" style="left:393.7px;top:84.8px;font-size:12px;transform:scaleX(0.958);color:#111">1282977</div>
<div class="t" style="left:521.8px;top:84.8px;font-size:12px;transform:scaleX(1.017);color:#111">23/23/23</div>
<div class="t" style="left:672.9px;top:84.8px;font-size:12px;transform:scaleX(0.876);color:#111">NAN</div>
<div class="t" style="left:711.8px;top:84.8px;font-size:12px;transform:scaleX(0.946);color:#111">766</div>
<div class="t" style="left:768px;top:84.8px;font-size:12px;transform:scaleX(0.966);color:#111">1674,90</div>
<div class="t" style="left:363.2px;top:100.4px;font-size:12px;transform:scaleX(0.875);color:#111">3</div>
<div class="t" style="left:393.7px;top:100.4px;font-size:12px;transform:scaleX(0.951);color:#111">3795</div>
<div class="t" style="left:521.8px;top:100.4px;font-size:12px;transform:scaleX(1.017);color:#111">71/71/71</div>
<div class="t" style="left:672.9px;top:100.4px;font-size:12px;transform:scaleX(0.876);color:#111">NAN</div>
<div class="t" style="left:711.8px;top:100.4px;font-size:12px;transform:scaleX(0.936);color:#111">24</div>
<div class="t" style="left:768px;top:100.4px;font-size:12px;transform:scaleX(0.966);color:#111">158,13</div>
<div class="t" style="left:363.2px;top:116.1px;font-size:12px;transform:scaleX(0.875);color:#111">4</div>
<div class="t" style="left:393.7px;top:116.1px;font-size:12px;transform:scaleX(0.946);color:#111">927</div>
<div class="t" style="left:521.8px;top:116.1px;font-size:12px;transform:scaleX(1.017);color:#111">91/91/91</div>
<div class="t" style="left:672.9px;top:116.1px;font-size:12px;transform:scaleX(0.876);color:#111">NAN</div>
<div class="t" style="left:711.8px;top:116.1px;font-size:12px;transform:scaleX(0.905);color:#111">5</div>
<div class="t" style="left:768px;top:116.1px;font-size:12px;transform:scaleX(0.966);color:#111">185,40</div>
<div class="t" style="left:363.2px;top:131.7px;font-size:12px;transform:scaleX(0.875);color:#111">5</div>
<div class="t" style="left:393.7px;top:131.7px;font-size:12px;transform:scaleX(0.946);color:#111">442</div>
<div class="t" style="left:521.8px;top:131.7px;font-size:12px;transform:scaleX(1.078);color:#111">11/11/11</div>
<div class="t" style="left:672.9px;top:131.7px;font-size:12px;transform:scaleX(0.876);color:#111">NAN</div>
<div class="t" style="left:711.8px;top:131.7px;font-size:12px;transform:scaleX(0.946);color:#111">108</div>
<div class="t" style="left:768px;top:131.7px;font-size:12px;transform:scaleX(0.965);color:#111">4,09</div>
<div class="t" style="left:363.2px;top:147.3px;font-size:12px;transform:scaleX(0.875);color:#111">6</div>
<div class="t" style="left:393.7px;top:147.3px;font-size:12px;transform:scaleX(0.946);color:#111">415</div>
<div class="t" style="left:521.8px;top:147.3px;font-size:12px;transform:scaleX(1.002);color:#111">107/107/107</div>
<div class="t" style="left:672.9px;top:147.3px;font-size:12px;transform:scaleX(0.876);color:#111">NAN</div>
<div class="t" style="left:711.8px;top:147.3px;font-size:12px;transform:scaleX(0.905);color:#111">1</div>
<div class="t" style="left:768px;top:147.3px;font-size:12px;transform:scaleX(0.966);color:#111">415,00</div>
<div class="t" style="left:363.2px;top:162.9px;font-size:12px;transform:scaleX(0.875);color:#111">7</div>
<div class="t" style="left:393.7px;top:162.9px;font-size:12px;transform:scaleX(0.936);color:#111">84</div>
<div class="t" style="left:521.8px;top:162.9px;font-size:12px;transform:scaleX(1.002);color:#111">122/122/122</div>
<div class="t" style="left:672.9px;top:162.9px;font-size:12px;transform:scaleX(0.876);color:#111">NAN</div>
<div class="t" style="left:711.8px;top:162.9px;font-size:12px;transform:scaleX(0.905);color:#111">1</div>
<div class="t" style="left:768px;top:162.9px;font-size:12px;transform:scaleX(0.966);color:#111">84,00</div>
<div class="t" style="left:512.3px;top:406.8px;font-size:12px;transform:scaleX(0.936);color:#111">ДЛЯ ЦВЕТА:</div>
<div class="t" style="left:512.3px;top:421.4px;font-size:12px;transform:scaleX(1.024);color:#111">среднее значение площади: 286356,70</div>
<div class="t" style="left:512.3px;top:436px;font-size:12px;transform:scaleX(1.039);color:#111">среднее квадратическое отклонение: 475769,40</div>
<div class="t" style="left:512.3px;top:450.6px;font-size:12px;transform:scaleX(1.022);color:#111">коэффициент вариации: 166,15%</div>
<div class="t" style="left:512.3px;top:465.2px;font-size:12px;transform:scaleX(0.917);color:#111">ДЛЯ ПЯТЕН:</div>
<div class="t" style="left:512.3px;top:479.8px;font-size:12px;transform:scaleX(1.031);color:#111">среднее количество пятен в цветовом кластере: 298,71</div>
<div class="t" style="left:512.3px;top:494.4px;font-size:12px;transform:scaleX(1.042);color:#111">среднее квадратическое отклонение: 25,70</div>
<div class="t" style="left:512.3px;top:509px;font-size:12px;transform:scaleX(1.016);color:#111">коэффициент вариации: 8,60%</div>
<div class="t" style="left:876.4px;top:28.9px;font-size:9px;transform:scaleX(0.905)">Загрузить</div>
<div class="t" style="left:875.8px;top:52.2px;font-size:9px;transform:scaleX(0.858)">Сохранить</div>
<div class="t" style="left:859.3px;top:70.8px;font-size:9px;transform:scaleX(0.814)">Масштаб:</div>
<div class="t" style="left:860.5px;top:85.4px;font-size:9px;transform:scaleX(0.816)">80%</div>
<div class="t" style="left:870.3px;top:101.7px;font-size:9px;transform:scaleX(0.869)">Анализ</div>
<div class="t" style="left:870.9px;top:113px;font-size:9px;transform:scaleX(0.780)">Инф.</div>
<div class="t" style="left:864.7px;top:124.7px;font-size:9px;transform:scaleX(0.937)">Уменьшить разр</div>
<div class="t" style="left:865.2px;top:134.6px;font-size:9px;transform:scaleX(0.866)">ширина (точки):</div>
<div class="t" style="left:867.7px;top:147.7px;font-size:9px;transform:scaleX(0.988)">10</div>
<div class="t" style="left:882px;top:168.5px;font-size:9px;transform:scaleX(0.863)">Задать</div>
<div class="t" style="left:864.7px;top:191px;font-size:9px;transform:scaleX(0.920)">Кластеризация</div>
<div class="t" style="left:865.2px;top:201.4px;font-size:9px;transform:scaleX(0.854)">радиус (1-360):</div>
<div class="t" style="left:867.7px;top:215.5px;font-size:9px;transform:scaleX(0.988)">30</div>
<div class="t" style="left:889.5px;top:236px;font-size:9px;transform:scaleX(0.860)">Ok</div>
<div class="t" style="left:865.1px;top:257.7px;font-size:9px;transform:scaleX(0.872)">Области</div>
<div class="t" style="left:866.1px;top:268.3px;font-size:9px;transform:scaleX(0.808)">ширина:</div>
<div class="t" style="left:903.9px;top:282.7px;font-size:9px;transform:scaleX(0.780)">1</div>
<div class="t" style="left:866.1px;top:296.9px;font-size:9px;transform:scaleX(0.916)">высота</div>
<div class="t" style="left:903.9px;top:310.3px;font-size:9px;transform:scaleX(0.780)">1</div>
<div class="t" style="left:879.3px;top:332px;font-size:9px;transform:scaleX(0.877)">Ok</div>
<div class="t" style="left:911.1px;top:332px;font-size:9px;transform:scaleX(0.785)">R</div>
<div class="t" style="left:865.2px;top:354.4px;font-size:9px;transform:scaleX(0.881)">Размытие</div>
<div class="t" style="left:905.5px;top:371.3px;font-size:9px;transform:scaleX(0.780)">1</div>
<div class="t" style="left:879px;top:393.5px;font-size:9px;transform:scaleX(0.868)">Ok</div>
<div class="t" style="left:911.7px;top:393.5px;font-size:9px;transform:scaleX(0.780)">R</div>
<div class="t" style="left:865.2px;top:415.8px;font-size:9px;transform:scaleX(0.911)">Физ-й размер:</div>
<div class="t" style="left:865.2px;top:426.2px;font-size:9px;transform:scaleX(0.884)">Ширина, мм:</div>
<div class="t" style="left:908.8px;top:440.5px;font-size:9px;transform:scaleX(0.927)">0,0</div>
<div class="t" style="left:889.5px;top:460.8px;font-size:9px;transform:scaleX(0.816)">Ok</div>

<!-- bottom edge -->
<div class="a" style="left:0;top:561px;width:935px;height:2px;background:linear-gradient(#f4f2e6,#d8d6cc)"></div>
<div class="a" style="left:0;top:563px;width:935px;height:3px;background:linear-gradient(#8e8e8c,#aeaeac)"></div>
<div class="a" style="left:147px;top:563px;width:115px;height:3px;background:linear-gradient(#6a6a6a,#808080)"></div>
<div class="a" style="left:12px;top:563px;width:17px;height:6px;border-radius:50%;border:1px solid #e8f0f4;background:#789cc0"></div>
</body>
</html>
